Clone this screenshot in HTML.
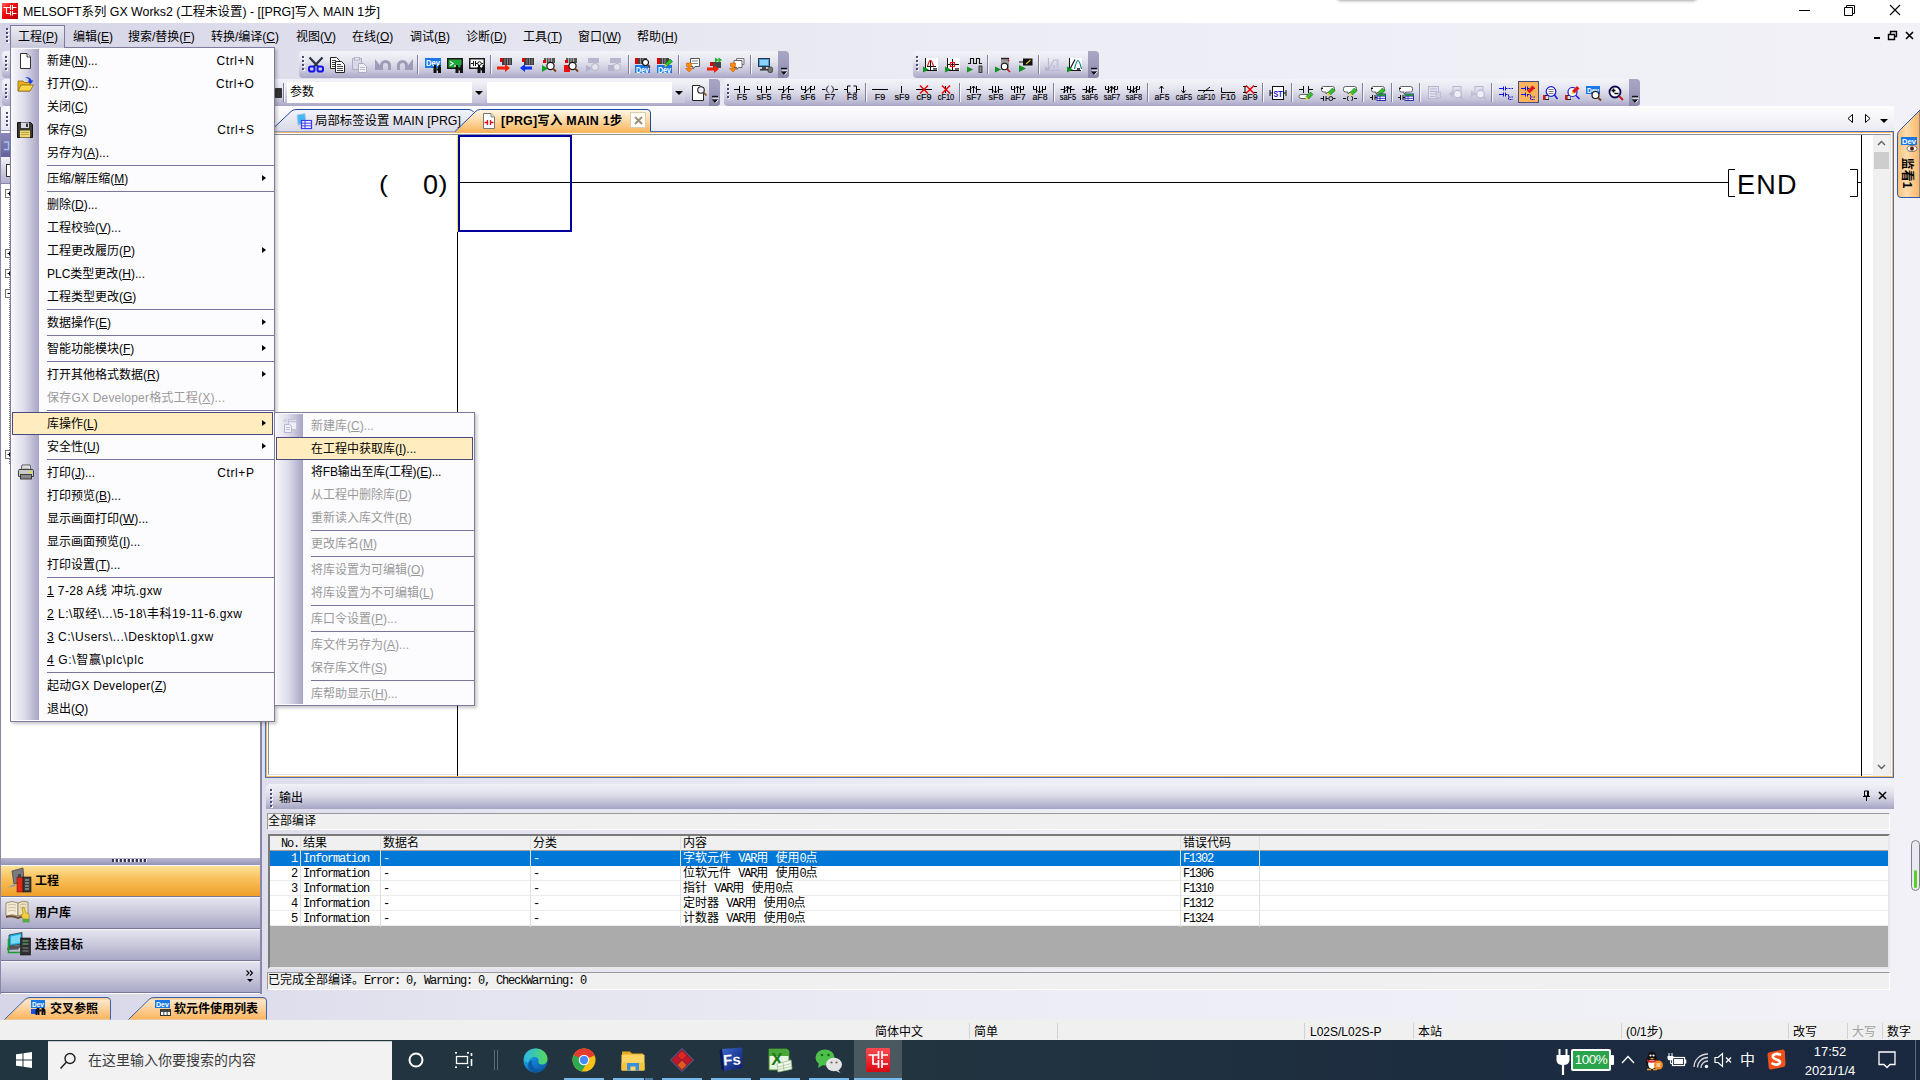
<!DOCTYPE html>
<html lang="zh-CN">
<head>
<meta charset="utf-8">
<title>MELSOFT系列 GX Works2</title>
<style>
*{box-sizing:border-box;margin:0;padding:0}
html,body{width:1920px;height:1080px;overflow:hidden}
body{position:relative;background:linear-gradient(to right,#d6d6e8 0,#e4e4f0 25%,#ededf5 55%,#f1f1f7 100%);font-family:"Liberation Sans","Noto Sans CJK SC",sans-serif;font-size:12px;color:#000;line-height:1}
.abs{position:absolute}
u{text-decoration:underline;text-underline-offset:1px}
svg{display:block;overflow:visible}
/* title */
#title{left:0;top:0;width:1920px;height:23px;background:#fff}
#title .txt{left:23px;top:6px;font-size:12.4px;white-space:nowrap}
/* menubar / docks */
#dock{left:0;top:23px;width:1920px;height:84px;background:linear-gradient(to right,#d4d4e6 0,#e4e4f0 25%,#ededf5 55%,#f1f1f7 100%)}
.mi{top:31px;white-space:nowrap;font-size:12px}
/* toolbars */
.tb{border-radius:4px 3px 3px 4px;background:linear-gradient(to bottom,#f3f3f9 0,#e6e6f0 35%,#c6c5db 75%,#a9a7c6 100%);height:27px}
.tb .cap{position:absolute;right:0;top:0;width:11px;height:27px;border-radius:0 4px 4px 0;background:linear-gradient(to bottom,#a9a7c4 0,#9d9bbb 50%,#8886a8 100%)}
.grip{position:absolute;left:3px;top:5px;width:2px;height:14px;background:repeating-linear-gradient(to bottom,#4a4878 0,#4a4878 2px,transparent 2px,transparent 4px);filter:drop-shadow(1px 1px 0 #fff)}
.sep{position:absolute;top:4px;width:2px;height:19px;border-left:1px solid #7f7da0;border-right:1px solid #f6f6fb}
/* tab strip */
#tabrow{left:262px;top:106px;width:1632px;height:25px;background:linear-gradient(to bottom,#fdfdfe 0,#f5f5f9 50%,#e9e9f1 100%)}
/* editor */
#edwrap{left:265px;top:131px;width:1629px;height:647px;background:#fff;border:1px solid #4a6fb5}
#edin{position:absolute;left:0;top:0;right:0;bottom:0;border:1px solid #f5b864}
#edin2{position:absolute;left:1px;top:1px;right:1px;bottom:1px;border:1px solid #8e8e98;border-right-color:#e4e4e4;border-bottom-color:#e4e4e4}
.lad{font-family:"Liberation Sans",sans-serif;font-size:27px;white-space:nowrap}
/* left panel */
#left{left:0;top:107px;width:262px;height:887px;background:#fff;border-left:1px solid #8a88aa;border-right:2px solid #8a88aa}
.nav{position:absolute;left:0;width:259px;height:32px;border-top:1px solid #f6f6fb;border-bottom:1px solid #77759a;background:linear-gradient(to bottom,#e4e4ef 0,#cfcee0 40%,#a9a7c6 100%);font-weight:bold;font-size:12px}
.nav span{position:absolute;left:34px;top:9px}
.nav.on{background:linear-gradient(to bottom,#fbe29a 0,#f9c25e 40%,#ef9f28 100%)}
/* output */
#outhead{left:266px;top:784px;width:1628px;height:25px;border-radius:4px 4px 0 0;background:linear-gradient(to bottom,#f0f0f7 0,#e0e0ec 40%,#c0bfd6 75%,#a5a3c3 100%)}
.sunk{background:#f0f0f0;border:1px solid;border-color:#9a9a9a #fff #fff #9a9a9a}
.ss{font-family:"Liberation Mono","Noto Sans CJK SC",monospace;font-size:12px;white-space:nowrap;line-height:15px}
.ss i{font-style:normal;letter-spacing:-1.2px}
#otab{left:268px;top:834px;width:1622px;height:135px;background:#ababab;border:2px solid;border-color:#7a7a7a #e8e8e8 #e8e8e8 #7a7a7a}
#otab .hd{position:absolute;left:0;top:0;width:1618px;height:15px;background:#f0f0f0;border-bottom:1px solid #a0a0a0}
#otab .r{position:absolute;left:0;width:1618px;height:15px;background:#fff;border-bottom:1px solid #ececec}
#otab .r.sel{background:#0078d7;color:#fff;border-bottom-color:#0078d7}
#otab .c{position:absolute;top:1px;height:15px}
#otab .v{position:absolute;top:0;width:1px;height:91px;background:#e0e0e0}
/* bottom tabs */
.btab{position:absolute;top:997px;height:23px}
.btab span{position:absolute;top:6px;font-weight:bold;font-size:12px;white-space:nowrap}
/* status bar */
#status{left:0;top:1020px;width:1920px;height:20px;background:#f0f0f0}
#status div{position:absolute;top:6px;font-size:12px;white-space:nowrap}
#status b{position:absolute;top:3px;width:1px;height:16px;background:#d2d2d2}
/* taskbar */
#task{left:0;top:1040px;width:1920px;height:40px;background:linear-gradient(to right,#20353f 0,#22343f 45%,#1e2e40 70%,#1a2840 100%)}
#task .ul{position:absolute;top:38px;height:2px;background:#76b9ed}
/* document tabs */
.dtab{position:absolute;top:109px;height:23px}
.dtab span{position:absolute;top:6px;font-size:12.4px;white-space:nowrap}
/* popup menus */
.menu{position:absolute;background:#fcfbfe;border:1px solid #7d7b9e;box-shadow:2px 2px 3px rgba(0,0,0,.22)}
.menu .gut{position:absolute;left:1px;top:1px;bottom:1px;width:27px;background:linear-gradient(to right,#f6f6fb 0,#dddcea 45%,#a7a5c5 100%)}
.menu .it{position:absolute;left:0;height:23px;font-size:12px;white-space:nowrap}
.menu .it span{position:absolute;top:6px}
.menu .it .k{left:auto;right:18.500px;letter-spacing:.6px}
.menu .it .ar{position:absolute;right:7px;top:8px;width:0;height:0;border-left:4px solid #000;border-top:3.500px solid transparent;border-bottom:3.500px solid transparent}
.menu .hr{position:absolute;height:1px;background:#77759b}
.menu .hot{position:absolute;border:1px solid #4b4980;background:#ffedc0}
.menu .dis{color:#9a9a9a}
</style>
</head>
<body>
<!-- title bar -->
<div id="title" class="abs">
 <svg class="abs" style="left:2px;top:3px" width="16" height="16" viewBox="0 0 16 16">
  <defs><linearGradient id="gxr" x1="0" y1="0" x2="1" y2="1"><stop offset="0" stop-color="#ff5a5a"/><stop offset=".4" stop-color="#f01010"/><stop offset="1" stop-color="#b80008"/></linearGradient></defs>
  <rect width="16" height="16" fill="url(#gxr)"/>
  <path d="M1.500 4.500H8.500M8.500 2V7M10.500 2V7M10.500 4.500H14.500M4.500 4.500V10.500H8.500M8.500 8V12.500M10.500 8V12.500M10.500 10.500H14.500" stroke="#fff" stroke-width="1.100" fill="none"/>
 </svg>
 <div class="abs txt">MELSOFT系列 GX Works2 (工程未设置) - [[PRG]写入 MAIN 1步]</div>
 <div class="abs" style="left:1338px;top:-5px;width:358px;height:5px;background:#b4b4b4;border-radius:0 0 3px 3px;box-shadow:0 0 3px 1px rgba(0,0,0,.35)"></div>
 <svg class="abs" style="left:1780px;top:0" width="140" height="23" viewBox="0 0 140 23">
  <path d="M19 10.5H30" stroke="#000" stroke-width="1" fill="none"/>
  <path d="M64.5 7.5H72.5V15.5H64.5ZM66.5 7.5V5.5H74.5V13.5H72.5" stroke="#000" stroke-width="1" fill="none"/>
  <path d="M110 5L120 15M120 5L110 15" stroke="#000" stroke-width="1.1" fill="none"/>
 </svg>
</div>
<!-- menubar + toolbar dock -->
<div id="dock" class="abs"></div>
<div class="grip" style="left:6px;top:28px;height:14px"></div>
<div class="abs" id="mopen" style="left:10px;top:25px;width:55px;height:23px;border:1px solid #7d7b9e;border-bottom:none;background:linear-gradient(to bottom,#ececf4,#c9c8dc)"></div>
<div class="abs mi" style="left:18px">工程(<u>P</u>)</div>
<div class="abs mi" style="left:73px">编辑(<u>E</u>)</div>
<div class="abs mi" style="left:128px">搜索/替换(<u>F</u>)</div>
<div class="abs mi" style="left:211px">转换/编译(<u>C</u>)</div>
<div class="abs mi" style="left:296px">视图(<u>V</u>)</div>
<div class="abs mi" style="left:352px">在线(<u>O</u>)</div>
<div class="abs mi" style="left:410px">调试(<u>B</u>)</div>
<div class="abs mi" style="left:466px">诊断(<u>D</u>)</div>
<div class="abs mi" style="left:523px">工具(<u>T</u>)</div>
<div class="abs mi" style="left:578px">窗口(<u>W</u>)</div>
<div class="abs mi" style="left:637px">帮助(<u>H</u>)</div>
<svg class="abs" style="left:1868px;top:28px" width="48" height="16" viewBox="0 0 48 16">
 <rect x="6" y="9" width="6" height="2" fill="#000"/>
 <path d="M20.5 6.5H26.5V11.5H20.5ZM22.5 6V3.5H28.5V8.5H27" stroke="#000" stroke-width="1.4" fill="none"/>
 <path d="M38 4L45 11M45 4L38 11" stroke="#000" stroke-width="1.6" fill="none"/>
</svg>
<!-- tab strip row -->
<div id="tabrow" class="abs"></div>
<!-- left navigation panel -->
<div id="left" class="abs">
 <div class="abs" style="left:0;top:-1px;width:259px;height:25px;background:linear-gradient(to bottom,#fafafd,#e4e4ef);border-radius:4px 0 0 0;border-bottom:1px solid #9a98b8"></div>
 <div class="grip" style="left:5px;top:5px;height:14px"></div>
 <div class="abs" style="left:0;top:26px;width:259px;height:24px;background:linear-gradient(to bottom,#8a88b8,#64629a)"></div>
 <svg class="abs" style="left:1px;top:34px" width="8" height="10" viewBox="0 0 8 10"><path d="M2 1H6.500V8.500H2" fill="none" stroke="#9ec4f4" stroke-width="1.400"/></svg>
 <div class="abs" style="left:0;top:50px;width:259px;height:27px;background:linear-gradient(to bottom,#f2f2f8,#b0aecc);border-bottom:1px solid #8a88aa"></div>
 <div class="abs" style="left:5px;top:57px;width:8px;height:13px;background:#fff;border:1px solid #333"></div>
 <div class="abs" style="left:8px;top:88px;width:1px;height:270px;background:repeating-linear-gradient(to bottom,#888 0,#888 1px,transparent 1px,transparent 2px)"></div>
 <svg class="abs" style="left:4px;top:82px" width="9" height="280" viewBox="0 0 9 280"><g fill="#fff" stroke="#777" stroke-width="1"><rect x="0.500" y="0.500" width="8" height="8"/><rect x="0.500" y="60.500" width="8" height="8"/><rect x="0.500" y="80.500" width="8" height="8"/><rect x="0.500" y="100.500" width="8" height="8"/><rect x="0.500" y="261.500" width="8" height="8"/></g><path d="M2.500 4.500H6.500M4.500 2.500V6.500M2.500 64.500H6.500M4.500 62.500V66.500M2.500 84.500H6.500M4.500 82.500V86.500M2.500 104.500H6.500M2.500 265.500H6.500M4.500 263.500V267.500" stroke="#000" stroke-width="1"/></svg>
 <div class="abs" style="left:0;top:751px;width:259px;height:7px;background:linear-gradient(to bottom,#b9b8d0,#9593b6)"></div>
 <div class="abs" style="left:111px;top:752px;width:36px;height:3px;background:repeating-linear-gradient(to right,#33315a 0,#33315a 2px,#fff 2px,#fff 3px,transparent 3px,transparent 4px)"></div>
 <div class="nav on" style="top:758px"><span>工程</span></div>
 <div class="nav" style="top:790px"><span>用户库</span></div>
 <div class="nav" style="top:822px"><span>连接目标</span></div>
 <div class="nav" style="top:854px;height:32px"></div>
 <svg class="abs" style="left:5px;top:760px" width="26" height="28" viewBox="0 0 26 28"><path d="M6 4L17 1L18 15L8 17Z" fill="#7a7a82" stroke="#444" stroke-width=".8"/><path d="M8 17L1 21L10 19Z" fill="#9a9aa4"/><rect x="11" y="10" width="6" height="15" fill="#e02818" stroke="#7a1008" stroke-width=".6"/><rect x="12" y="7" width="3" height="4" fill="#444"/><rect x="17" y="10" width="8" height="15" fill="#3a3a3e" stroke="#111" stroke-width=".6"/><path d="M19 13H23M19 16H23M19 19H23M19 22H23" stroke="#b8c8b8" stroke-width="1.200"/></svg>
 <svg class="abs" style="left:4px;top:792px" width="27" height="26" viewBox="0 0 27 26"><path d="M1 4Q7 1 13 4V17Q7 14.500 1 17Z" fill="#f4ecd8" stroke="#8a7a5a" stroke-width=".8"/><path d="M13 4Q18 1 23 3V16Q18 14.500 13 17Z" fill="#ece0c4" stroke="#8a7a5a" stroke-width=".8"/><path d="M1 17Q7 15 13 18Q18 15.500 23 16.500V18.500Q18 17.500 13 20Q7 17 1 19Z" fill="#6a4a2a"/><path d="M3 6Q7 4.500 11 6M3 9Q7 7.500 11 9M3 12Q7 10.500 11 12M15 6Q18 4.500 21 5.500M15 9Q18 7.500 21 8.500" stroke="#b0a080" stroke-width=".6" fill="none"/><path d="M17 9L19 8.500L21 14L24 15V20H18L16 16L18 15Z" fill="#f0d040" stroke="#a08010" stroke-width=".6"/><rect x="17.500" y="20" width="7" height="3.500" fill="#5aa84a"/></svg>
 <svg class="abs" style="left:5px;top:824px" width="26" height="26" viewBox="0 0 26 26"><path d="M3 4L16 1.500V13L3 15Z" fill="#18b0e8" stroke="#333" stroke-width=".8"/><path d="M5 5.500L14.500 3.500V11.500L5 13Z" fill="#7ad8f8"/><path d="M2 15L1 19L12 18.500L16 14Z" fill="#555"/><path d="M2.500 8V21.500H14" stroke="#18a028" stroke-width="1.600" fill="none"/><rect x="14.500" y="7" width="10" height="17" fill="#2e2e32" stroke="#111" stroke-width=".6"/><path d="M16.500 10H22.500M16.500 13H22.500" stroke="#6ac87a" stroke-width="1.200"/><path d="M16.500 17H22.500M16.500 20H22.500" stroke="#888" stroke-width="1.200"/></svg>

 <svg class="abs" style="left:244px;top:862px" width="10" height="16" viewBox="0 0 10 16"><path d="M1.5 1.5L4 4L1.5 6.5M5 1.5L7.5 4L5 6.5" stroke="#000" stroke-width="1.1" fill="none"/><path d="M2 10H8L5 13Z" fill="#000"/></svg>
</div>
<!-- editor -->
<div id="edwrap" class="abs"><div id="edin"><div id="edin2"></div></div>
 <!-- scrollbar -->
 <div class="abs" style="left:1607px;top:3px;width:17px;height:641px;background:#f0f0f0"></div>
 <div class="abs" style="left:1608px;top:20px;width:15px;height:17px;background:#cdcdcd"></div>
 <svg class="abs" style="left:1611px;top:8px" width="9" height="6" viewBox="0 0 9 6"><path d="M1 5L4.5 1.5L8 5" stroke="#606060" stroke-width="1.4" fill="none"/></svg>
 <svg class="abs" style="left:1611px;top:632px" width="9" height="6" viewBox="0 0 9 6"><path d="M1 1L4.5 4.5L8 1" stroke="#606060" stroke-width="1.4" fill="none"/></svg>
 <!-- ladder -->
 <div class="abs" style="left:191px;top:100px;width:1px;height:544px;background:#000"></div>
 <div class="abs" style="left:1595px;top:3px;width:1px;height:641px;background:#000"></div>
 <div class="abs" style="left:192px;top:50px;width:1270px;height:1px;background:#000"></div>
 <div class="abs" style="left:192px;top:3px;width:114px;height:97px;border:2px solid #0000a0"></div><div class="abs" style="left:191px;top:3px;width:1px;height:97px;background:#f0f040"></div>
 <div class="abs lad" style="left:113px;top:40px;transform:translateY(1px) scaleY(.87);transform-origin:50% 0">(</div>
 <div class="abs lad" style="left:157px;top:40px">0</div><div class="abs lad" style="left:172.500px;top:40px;transform:translateY(1px) scaleY(.87);transform-origin:50% 0">)</div>
 <div class="abs lad" style="left:1471px;top:40px;letter-spacing:1.2px">END</div>
 <svg class="abs" style="left:1461px;top:36px" width="140" height="30" viewBox="0 0 140 30"><path d="M8 1.5H1.5V28.5H8M123 1.5H130.500V28.5H123M131 14.500H135" stroke="#000" stroke-width="1" fill="none"/></svg>
</div>
<!-- output header -->
<div id="outhead" class="abs">
 <div class="grip" style="left:4px;top:5px;height:18px"></div>
 <div class="abs" style="left:13px;top:8px;font-size:12px">输出</div>
 <svg class="abs" style="left:1594px;top:6px" width="30" height="12" viewBox="0 0 30 12"><path d="M4.500 1H8.500V6H4.500ZM7.500 1V6M3 6.500H10M6.500 7V11" stroke="#000" stroke-width="1" fill="none"/><path d="M19 2L26 9M26 2L19 9" stroke="#000" stroke-width="1.5" fill="none"/></svg>
</div>
<div class="abs sunk ss" style="left:267px;top:813px;width:1623px;height:17px;padding-left:0"><span style="position:relative;top:1px">全部编译</span></div>
<div id="otab" class="abs ss">
 <div class="hd"><div class="c" style="left:11px"><i>No.</i></div><div class="c" style="left:33px">结果</div><div class="c" style="left:113px">数据名</div><div class="c" style="left:263px">分类</div><div class="c" style="left:413px">内容</div><div class="c" style="left:913px">错误代码</div></div>
 <div class="r sel" style="top:15px"><div class="c" style="left:21px"><i>1</i></div><div class="c" style="left:33px"><i>Information</i></div><div class="c" style="left:113px"><i>-</i></div><div class="c" style="left:263px"><i>-</i></div><div class="c" style="left:413px">字软元件 <i>VAR</i>用 使用<i>0</i>点</div><div class="c" style="left:913px"><i>F1302</i></div></div>
 <div class="r" style="top:30px"><div class="c" style="left:21px"><i>2</i></div><div class="c" style="left:33px"><i>Information</i></div><div class="c" style="left:113px"><i>-</i></div><div class="c" style="left:263px"><i>-</i></div><div class="c" style="left:413px">位软元件 <i>VAR</i>用 使用<i>0</i>点</div><div class="c" style="left:913px"><i>F1306</i></div></div>
 <div class="r" style="top:45px"><div class="c" style="left:21px"><i>3</i></div><div class="c" style="left:33px"><i>Information</i></div><div class="c" style="left:113px"><i>-</i></div><div class="c" style="left:263px"><i>-</i></div><div class="c" style="left:413px">指针 <i>VAR</i>用 使用<i>0</i>点</div><div class="c" style="left:913px"><i>F1310</i></div></div>
 <div class="r" style="top:60px"><div class="c" style="left:21px"><i>4</i></div><div class="c" style="left:33px"><i>Information</i></div><div class="c" style="left:113px"><i>-</i></div><div class="c" style="left:263px"><i>-</i></div><div class="c" style="left:413px">定时器 <i>VAR</i>用 使用<i>0</i>点</div><div class="c" style="left:913px"><i>F1312</i></div></div>
 <div class="r" style="top:75px"><div class="c" style="left:21px"><i>5</i></div><div class="c" style="left:33px"><i>Information</i></div><div class="c" style="left:113px"><i>-</i></div><div class="c" style="left:263px"><i>-</i></div><div class="c" style="left:413px">计数器 <i>VAR</i>用 使用<i>0</i>点</div><div class="c" style="left:913px"><i>F1324</i></div></div>
 <div class="v" style="left:30px"></div><div class="v" style="left:110px"></div><div class="v" style="left:260px"></div><div class="v" style="left:410px"></div><div class="v" style="left:910px"></div><div class="v" style="left:989px"></div>
</div>
<div class="abs sunk ss" style="left:267px;top:972px;width:1623px;height:18px"><span style="position:relative;top:1px">已完成全部编译。<i>Error: 0, Warning: 0, CheckWarning: 0</i></span></div>
<!-- scroll pill at far right -->
<div class="abs" style="left:1911px;top:840px;width:9px;height:51px;border:1.500px solid #7e7e86;border-radius:5px;background:#e9e9f1"><div class="abs" style="left:1.500px;top:29px;width:3px;height:18px;background:#58d020;border-radius:1.500px"></div></div>
<!-- bottom tabs -->
<div class="btab" style="left:4px;width:107px">
 <svg class="abs" style="left:0;top:0" width="107" height="23" viewBox="0 0 107 23"><defs><linearGradient id="og" x1="0" y1="0" x2="0" y2="1"><stop offset="0" stop-color="#fbc27a"/><stop offset=".14" stop-color="#fde6c8"/><stop offset="1" stop-color="#fbb45c"/></linearGradient></defs><path d="M0.500 22.500L21 2.500Q23 0.500 26 0.500H103Q106.500 0.500 106.500 4V22.500" fill="url(#og)" stroke="#3a62b0" stroke-width="1"/></svg>
 <svg class="abs" style="left:27px;top:3px" width="16" height="16" viewBox="0 0 16 16"><rect x="0" y="0" width="14" height="8" fill="#1a78e6"/><text x="7" y="7" font-family="Liberation Sans,sans-serif" font-size="8" font-weight="bold" fill="#fff" text-anchor="middle" textLength="12" lengthAdjust="spacingAndGlyphs">Dev</text><rect x="0" y="9" width="7" height="5" fill="#1a50e0"/><path d="M6 8H8.500V15H6.800V12H6.300V15H4.500V10ZM10.500 8H13L14.500 10V15H12.700V12H12.300V15H10.500Z" fill="#111"/><rect x="8.300" y="9.500" width="2.400" height="2" fill="#111"/></svg>
 <span style="left:46px">交叉参照</span>
</div>
<div class="btab" style="left:128px;width:139px">
 <svg class="abs" style="left:0;top:0" width="139" height="23" viewBox="0 0 139 23"><path d="M0.500 22.500L21 2.500Q23 0.500 26 0.500H135Q138.500 0.500 138.500 4V22.500" fill="url(#og)" stroke="#3a62b0" stroke-width="1"/></svg>
 <svg class="abs" style="left:27px;top:3px" width="16" height="16" viewBox="0 0 16 16"><rect x="0" y="0" width="15" height="8" fill="#1a78e6"/><text x="7.500" y="7" font-family="Liberation Sans,sans-serif" font-size="8" font-weight="bold" fill="#fff" text-anchor="middle" textLength="13" lengthAdjust="spacingAndGlyphs">Dev</text><rect x="5.500" y="9.500" width="10" height="6" fill="#fff" stroke="#333" stroke-width="1"/><path d="M5.500 11.500H15.500M8.800 9.500V15.500M12.200 9.500V15.500" stroke="#333" stroke-width=".9"/><rect x="5.500" y="9.500" width="10" height="2" fill="#444"/></svg>
 <span style="left:46px">软元件使用列表</span>
</div>
<!-- status bar -->
<div id="status" class="abs">
 <div style="left:875px">简体中文</div><b style="left:969px"></b>
 <div style="left:974px">简单</div><b style="left:1057px"></b>
 <b style="left:1304px"></b><div style="left:1310px">L02S/L02S-P</div>
 <b style="left:1413px"></b><div style="left:1418px">本站</div>
 <b style="left:1621px"></b><div style="left:1626px">(0/1步)</div>
 <b style="left:1788px"></b><div style="left:1793px">改写</div>
 <b style="left:1847px"></b><div style="left:1852px;color:#a0a0a0">大写</div>
 <b style="left:1882px"></b><div style="left:1887px">数字</div>
</div>
<!-- windows taskbar -->
<div id="task" class="abs">
 <svg class="abs" style="left:16px;top:12px" width="16" height="16" viewBox="0 0 16 16"><path d="M0 2.300L6.500 1.400V7.500H0ZM7.500 1.250L16 0V7.500H7.500ZM0 8.500H6.500V14.600L0 13.700ZM7.500 8.500H16V16L7.500 14.750Z" fill="#fff"/></svg>
 <div class="abs" style="left:48px;top:1px;width:344px;height:39px;background:#f2f2f2;border-top:1px solid #c8c8c8"></div>
 <svg class="abs" style="left:59px;top:12px" width="18" height="18" viewBox="0 0 18 18"><circle cx="11" cy="6.500" r="5" fill="none" stroke="#222" stroke-width="1.400"/><path d="M7.500 10L1.500 16.500" stroke="#222" stroke-width="1.500"/></svg>
 <div class="abs" style="left:88px;top:13px;font-size:14px;color:#3a3a3a;white-space:nowrap">在这里输入你要搜索的内容</div>
 <svg class="abs" style="left:407px;top:11px" width="18" height="18" viewBox="0 0 18 18"><circle cx="9" cy="9" r="6.500" fill="none" stroke="#fff" stroke-width="2"/></svg>
 <svg class="abs" style="left:454px;top:11px" width="20" height="18" viewBox="0 0 20 18"><path d="M1 1.500H3M1 16.500H3M13 1.500H15M13 16.500H15M2 1.500V3M14 1.500V3M2 16.500V15M14 16.500V15" stroke="#fff" stroke-width="1.200" fill="none"/><rect x="2.500" y="5.500" width="11" height="7" fill="none" stroke="#fff" stroke-width="1.300"/><path d="M17.500 2V5M17.500 8V15" stroke="#fff" stroke-width="1.600"/></svg>
 <div class="abs" style="left:494px;top:10px;width:1px;height:20px;background:#5a6870"></div><div class="abs" style="left:497px;top:10px;width:1px;height:20px;background:#5a6870"></div>
 <!-- edge -->
 <svg class="abs" style="left:523px;top:8px" width="25" height="25" viewBox="0 0 25 25"><defs><linearGradient id="eg" x1="0" y1="0" x2="1" y2="1"><stop offset="0" stop-color="#35c1f1"/><stop offset=".5" stop-color="#0f7fd0"/><stop offset="1" stop-color="#0b4f9c"/></linearGradient><linearGradient id="eg2" x1="0" y1="0" x2="1" y2="0"><stop offset="0" stop-color="#2ab8e8"/><stop offset="1" stop-color="#57d85a"/></linearGradient></defs><circle cx="12.500" cy="12.500" r="12" fill="url(#eg)"/><path d="M1 10C2 3.500 8 0.500 13 0.500C19 0.500 24.500 5 24.500 11C24.500 14.500 22 16.500 19 16.500C16 16.500 15 15 15.500 13.500C16 12 15 9 11.500 9C8 9 5.500 11.500 5.500 15C3 14 0.800 13 1 10Z" fill="url(#eg2)"/><path d="M9 13C8 17 11 21.500 16.500 21.500C19 21.500 21 20.500 22 19.500C20 23 16 24.800 12 24.500C7 24 4.500 20 5.500 15.500C6 13.500 7.500 12.500 9 13Z" fill="#0c59a4"/></svg>
 <!-- chrome -->
 <svg class="abs" style="left:572px;top:8px" width="24" height="24" viewBox="0 0 24 24"><circle cx="12" cy="12" r="11.500" fill="#fbc116"/><path d="M12 12L1.500 7.500A11.500 11.500 0 0 1 22.500 7.500Z" fill="#e33b2e"/><path d="M12 12L1.700 7A11.500 11.500 0 0 0 10 23.300L14 16Z" fill="#2da94f"/><path d="M1.700 7A11.500 11.500 0 0 1 22.300 7H12Z" fill="#e33b2e"/><circle cx="12" cy="12" r="5.300" fill="#fff"/><circle cx="12" cy="12" r="4.200" fill="#4a8af4"/></svg>
 <!-- explorer -->
 <svg class="abs" style="left:621px;top:10px" width="24" height="22" viewBox="0 0 24 22"><path d="M1 1.500H9L11 3.500H22V8H1Z" fill="#e8a81c"/><rect x="0.500" y="4.500" width="23" height="16" rx="1" fill="#fcd462"/><path d="M0.500 13H23.500V20.500H0.500Z" fill="#f8c43c"/><rect x="6" y="13" width="12" height="7.500" fill="#3a8ee0"/><rect x="9.500" y="16.500" width="5" height="4" fill="#fcd462"/></svg>
 <!-- diamond app -->
 <svg class="abs" style="left:670px;top:8px" width="24" height="24" viewBox="0 0 24 24"><path d="M12 0.500L23.500 12L12 23.500L0.500 12Z" fill="#8a1a3a" stroke="#5a6a9a" stroke-width="1"/><path d="M12 3L16.500 7.500L12 12L7.500 7.500Z" fill="#e0281c"/><path d="M6.500 8.500L11 13L6.500 17.500L2.500 13Z" fill="#c01828" transform="translate(0 -1)"/><path d="M17.500 8.500L21.500 13L17.500 17.500L13 13Z" fill="#c01828" transform="translate(0 -1)"/><path d="M12 12.500L16.500 17L12 21.500L7.500 17Z" fill="#e05a1c"/></svg>
 <!-- Fs -->
 <svg class="abs" style="left:719px;top:7px" width="24" height="27" viewBox="0 0 24 27"><defs><linearGradient id="fg" x1="0" y1="0" x2="1" y2="1"><stop offset="0" stop-color="#3a6ad0"/><stop offset="1" stop-color="#0a1a6a"/></linearGradient></defs><path d="M3 2L22 0.500Q23.500 0.500 23.500 2V21L5 24Z" fill="url(#fg)"/><path d="M0.500 3.500L3 2L5 24L2.500 22Z" fill="#0a1450"/><text x="13" y="18" font-family="Liberation Sans,sans-serif" font-weight="bold" font-size="15" fill="#fff" text-anchor="middle" transform="rotate(-4 13 14)">Fs</text></svg>
 <!-- excel -->
 <svg class="abs" style="left:767px;top:7px" width="26" height="26" viewBox="0 0 26 26"><path d="M2 2H20L22 4V23H2Z" fill="#e8f4e0" stroke="#3a8a2a" stroke-width="1"/><path d="M2 2H20L22 4V9H2Z" fill="#4aa83a"/><text x="10" y="18" font-family="Liberation Sans,sans-serif" font-weight="bold" font-size="17" fill="#1a7a1a" text-anchor="middle">X</text><path d="M10 17L24 13L25 22L11 25Z" fill="#f4f8f0" stroke="#9ac08a" stroke-width=".8"/><path d="M11 20L24.500 16.500M11 22.500L24.500 19.500M16 15.500L17 24" stroke="#9ac08a" stroke-width=".7"/></svg>
 <!-- wechat -->
 <svg class="abs" style="left:815px;top:9px" width="28" height="24" viewBox="0 0 28 24"><ellipse cx="10" cy="8.500" rx="9.500" ry="8" fill="#4cc04a"/><path d="M4 14L3 19L8 16Z" fill="#4cc04a"/><circle cx="7" cy="6" r="1.300" fill="#1a6a1a"/><circle cx="13.500" cy="6" r="1.300" fill="#1a6a1a"/><ellipse cx="19" cy="15.500" rx="8" ry="6.800" fill="#e4e4e4"/><path d="M23 21L25.500 24L21 22Z" fill="#e4e4e4"/><circle cx="16.500" cy="13.500" r="1.100" fill="#666"/><circle cx="21.500" cy="13.500" r="1.100" fill="#666"/></svg>
 <!-- gx works (active) -->
 <div class="abs" style="left:854px;top:0;width:48px;height:40px;background:#4a5860"></div>
 <svg class="abs" style="left:866px;top:8px" width="24" height="24" viewBox="0 0 24 24"><defs><linearGradient id="gxr2" x1="0" y1="0" x2="0" y2="1"><stop offset="0" stop-color="#ff4a50"/><stop offset="1" stop-color="#d80a14"/></linearGradient></defs><rect width="24" height="24" rx="1.500" fill="url(#gxr2)"/><path d="M2.500 7H12.500M12.500 3V11M16 3V11M16 7H22M7 7V16H12.500M12.500 12V20M16 12V20M16 16H22" stroke="#fff" stroke-width="1.700" fill="none"/></svg>
 <div class="ul" style="left:564px;width:40px"></div>
 <div class="ul" style="left:613px;width:31px"></div><div class="ul" style="left:645px;width:8px;background:#4d7ea3"></div>
 <div class="ul" style="left:662px;width:40px"></div>
 <div class="ul" style="left:711px;width:40px"></div>
 <div class="ul" style="left:760px;width:40px"></div>
 <div class="ul" style="left:809px;width:40px"></div>
 <div class="ul" style="left:854px;width:48px"></div>
 <!-- tray -->
 <svg class="abs" style="left:1556px;top:9px" width="14" height="26" viewBox="0 0 14 26"><path d="M3.500 0V6M10.500 0V6" stroke="#fff" stroke-width="2"/><path d="M0.500 6H13.500V11Q13.500 16 7 16Q0.500 16 0.500 11Z" fill="#fff"/><path d="M7 16V26" stroke="#fff" stroke-width="2.200"/></svg>
 <div class="abs" style="left:1571px;top:9px;width:40px;height:22px;border:2px solid #fff;border-radius:2px;background:#2aa44a"></div>
 <div class="abs" style="left:1611px;top:15px;width:3px;height:10px;background:#fff;border-radius:0 1px 1px 0"></div>
 <div class="abs" style="left:1573px;top:13px;width:36px;text-align:center;color:#fff;font-size:13.500px;letter-spacing:-.5px">100%</div>
 <svg class="abs" style="left:1621px;top:15px" width="14" height="9" viewBox="0 0 14 9"><path d="M1 8L7 1.500L13 8" stroke="#fff" stroke-width="1.300" fill="none"/></svg>
 <svg class="abs" style="left:1644px;top:11px" width="20" height="20" viewBox="0 0 20 20"><ellipse cx="8" cy="11" rx="6" ry="7.500" fill="#111"/><ellipse cx="8" cy="13" rx="3.800" ry="5" fill="#fff"/><circle cx="8" cy="5" r="4.200" fill="#111"/><circle cx="6.500" cy="4.500" r="1.100" fill="#fff"/><circle cx="9.500" cy="4.500" r="1.100" fill="#fff"/><path d="M5.500 7H10.500L8 8.500Z" fill="#f0a020"/><path d="M3 8.500Q8 11 13 8.500V10.500Q8 13 3 10.500Z" fill="#e02020"/><path d="M3 18.500H7M9 18.500H13" stroke="#f0a020" stroke-width="1.600"/><circle cx="14.500" cy="14" r="4.500" fill="#f08a20"/><path d="M12.500 13H16.500M12.500 15H16.500" stroke="#fff" stroke-width="1"/></svg>
 <svg class="abs" style="left:1667px;top:13px" width="20" height="14" viewBox="0 0 20 14"><rect x="5.500" y="4.500" width="12" height="8" fill="none" stroke="#fff" stroke-width="1.200"/><rect x="17.500" y="6.500" width="1.800" height="4" fill="#fff"/><rect x="7" y="6" width="9" height="5" fill="#fff"/><path d="M2 0V3M5 0V3" stroke="#fff" stroke-width="1"/><path d="M0.500 3H6.500V5Q6.500 7.500 3.500 7.500Q0.500 7.500 0.500 5Z" fill="#fff"/><path d="M3.500 7.500V10.500H5.500" stroke="#fff" stroke-width="1" fill="none"/></svg>
 <svg class="abs" style="left:1692px;top:12px" width="18" height="17" viewBox="0 0 18 17"><path d="M2 15C2 8 8 2 16 2M5.500 15.500C5.500 10 10 5.500 16 5.500M9 16C9 12 12 9 16 9" stroke="#d8d8d8" stroke-width="1.300" fill="none"/><circle cx="14.500" cy="14.500" r="1.700" fill="#fff"/></svg>
 <svg class="abs" style="left:1714px;top:12px" width="20" height="16" viewBox="0 0 20 16"><path d="M1 5.500H4L8.500 1.500V14.500L4 10.500H1Z" fill="none" stroke="#fff" stroke-width="1.200"/><path d="M12 5.500L17 10.500M17 5.500L12 10.500" stroke="#fff" stroke-width="1.200"/></svg>
 <div class="abs" style="left:1740px;top:12px;color:#fff;font-size:15px">中</div>
 <svg class="abs" style="left:1767px;top:9px" width="19" height="21" viewBox="0 0 19 21"><path d="M2 3.500L15.500 0.500Q17.500 0.300 17.800 2.300L18.500 15.500Q18.500 17.500 16.500 18L4 20.500Q2 20.800 1.700 18.800L0.500 5.500Q0.500 3.800 2 3.500Z" fill="#f0501a"/><path d="M14 6Q9 3.500 6 6.500Q5 9 9.500 10.500Q14.500 12 12.500 14.500Q9.500 17 4.500 14" stroke="#fff" stroke-width="2.600" fill="none"/></svg>
 <div class="abs" style="left:1800px;top:5px;width:60px;text-align:center;color:#fff;font-size:13px">17:52</div>
 <div class="abs" style="left:1796px;top:24px;width:68px;text-align:center;color:#fff;font-size:13px">2021/1/4</div>
 <svg class="abs" style="left:1878px;top:11px" width="18" height="19" viewBox="0 0 18 19"><path d="M1 1H17V13.500H12L9 16.500L6 13.500H1Z" fill="none" stroke="#fff" stroke-width="1.300"/></svg>
 <div class="abs" style="left:1915px;top:0;width:1px;height:40px;background:#5a6878"></div>
</div>
<!-- toolbars -->
<div class="abs tb" style="left:2px;top:51px;width:268px">
<div class="grip"></div>

</div>
<div class="abs tb" style="left:299px;top:51px;width:490px">
<div class="grip"></div>
<svg class="abs" style="left:9px;top:6px" width="16" height="16" viewBox="0 0 16 16"><path d="M1.500 0.500L10 9.500M14.500 0.500L6 9.500" stroke="#2a3444" stroke-width="2.200" fill="none"/><rect x="1" y="9.500" width="5.500" height="5" rx="1.800" fill="none" stroke="#1414f0" stroke-width="2"/><rect x="9.500" y="9.500" width="5.500" height="5" rx="1.800" fill="none" stroke="#1414f0" stroke-width="2"/></svg>
<svg class="abs" style="left:31px;top:6px" width="16" height="16" viewBox="0 0 16 16"><path d="M0.500 0.500H6.500L9.500 3.500V11.500H0.500Z" fill="#fff" stroke="#222"/><path d="M2 3.500H6M2 5.500H8M2 7.500H8M2 9.500H8" stroke="#444" stroke-width="1"/><path d="M5.500 4.500H11.500L14.500 7.500V15.500H5.500Z" fill="#fff" stroke="#222"/><path d="M7 7.500H11M7 9.500H13M7 11.500H13M7 13.500H13" stroke="#444" stroke-width="1"/></svg>
<svg class="abs" style="left:53px;top:6px" width="16" height="16" viewBox="0 0 16 16"><path d="M0.500 1.500H9.500V12.500H0.500Z" fill="#d9d8e6" stroke="#adabc4"/><rect x="2.500" y="0.500" width="5" height="2.500" fill="#e8e8f0" stroke="#adabc4" stroke-width=".8"/><path d="M6.500 6.500H11.500L14.500 9.500V15.500H6.500Z" fill="#f0f0f6" stroke="#adabc4"/><path d="M8 10.500H13M8 12.500H13" stroke="#bdbbd0" stroke-width="1"/></svg>
<svg class="abs" style="left:76px;top:6px" width="16" height="16" viewBox="0 0 16 16"><path d="M0 2V13H8.500Z" fill="#9d9bb6"/><path d="M5 13V8.500A5.500 5.500 0 0 1 16 8.500V13H13V8.500A2.500 2.500 0 0 0 8 8.500V13Z" fill="#9d9bb6"/></svg>
<svg class="abs" style="left:98px;top:6px" width="16" height="16" viewBox="0 0 16 16"><path d="M16 2V13H7.500Z" fill="#9d9bb6"/><path d="M11 13V8.500A5.500 5.500 0 0 0 0 8.500V13H3V8.500A2.500 2.500 0 0 1 8 8.500V13Z" fill="#9d9bb6"/></svg>
<svg class="abs" style="left:126px;top:6px" width="16" height="16" viewBox="0 0 16 16"><rect x="0" y="1" width="16" height="10" fill="#1a78e6"/><text x="8" y="9" font-family="Liberation Sans,sans-serif" font-size="9" font-weight="bold" fill="#fff" text-anchor="middle" textLength="14" lengthAdjust="spacingAndGlyphs">Dev</text><path d="M9 8H11V10H11.500V16H8.500V10H9ZM13.500 8H15.500V10H16V16H13V10H13.500Z" fill="#111"/><rect x="11.500" y="11.500" width="1.500" height="2" fill="#111"/></svg>
<svg class="abs" style="left:148px;top:6px" width="16" height="16" viewBox="0 0 16 16"><rect x="0.750" y="1.750" width="14.500" height="9.500" fill="#1fa83a" stroke="#1a1a1a" stroke-width="1.500"/><path d="M3 4.500L6 6.500L3 8.500M7 9H11" stroke="#fff" stroke-width="1.200" fill="none"/><path d="M9 8H11V10H11.500V16H8.500V10H9ZM13.500 8H15.500V10H16V16H13V10H13.500Z" fill="#111"/><rect x="11.500" y="11.500" width="1.500" height="2" fill="#111"/></svg>
<svg class="abs" style="left:170px;top:6px" width="16" height="16" viewBox="0 0 16 16"><rect x="0.750" y="1.750" width="14.500" height="9.500" fill="#fff" stroke="#1a1a1a" stroke-width="1.500"/><path d="M2 6.500H4.500M4.500 4V9M6.500 4V9M6.500 6.500H8.500M12.500 6.500H14" stroke="#111" stroke-width="1" fill="none"/><circle cx="10.500" cy="6.500" r="1.800" fill="none" stroke="#111"/><path d="M9 8H11V10H11.500V16H8.500V10H9ZM13.500 8H15.500V10H16V16H13V10H13.500Z" fill="#111"/><rect x="11.500" y="11.500" width="1.500" height="2" fill="#111"/></svg>
<svg class="abs" style="left:198px;top:6px" width="16" height="16" viewBox="0 0 16 16"><rect x="5" y="1" width="10" height="7" fill="#3a3a3a"/><path d="M8 1.500V7.500M10.500 1.500V7.500M13 1.500V7.500" stroke="#888" stroke-width="1"/><rect x="3" y="1" width="3" height="4" fill="#e00000"/><path d="M0 9.500H8V7L13 11L8 15V12.500H0Z" fill="#f02000"/></svg>
<svg class="abs" style="left:220px;top:6px" width="16" height="16" viewBox="0 0 16 16"><rect x="5" y="1" width="10" height="7" fill="#3a3a3a"/><path d="M8 1.500V7.500M10.500 1.500V7.500M13 1.500V7.500" stroke="#888" stroke-width="1"/><rect x="3" y="1" width="3" height="4" fill="#e00000"/><path d="M13 9.500H6V7L1 11L6 15V12.500H13Z" fill="#0a30f0"/></svg>
<svg class="abs" style="left:242px;top:6px" width="16" height="16" viewBox="0 0 16 16"><rect x="3" y="1" width="11" height="5" fill="#555"/><path d="M5.500 1V6M8 1V6M10.500 1V6" stroke="#bbb" stroke-width=".9"/><rect x="2" y="3" width="3" height="3" fill="#e00000"/><path d="M1 8L7 11.500L1 15Z" fill="#10a020"/><circle cx="9.500" cy="9" r="3.600" fill="#fff" stroke="#111" stroke-width="1.200"/><path d="M12 11.500L15 14.500" stroke="#7a3a10" stroke-width="1.800"/></svg>
<svg class="abs" style="left:264px;top:6px" width="16" height="16" viewBox="0 0 16 16"><rect x="3" y="1" width="11" height="5" fill="#555"/><path d="M5.500 1V6M8 1V6M10.500 1V6" stroke="#bbb" stroke-width=".9"/><rect x="2" y="3" width="3" height="3" fill="#e00000"/><rect x="1" y="8" width="6" height="7" fill="#ee1010"/><circle cx="9.500" cy="9" r="3.600" fill="#fff" stroke="#111" stroke-width="1.200"/><path d="M12 11.500L15 14.500" stroke="#7a3a10" stroke-width="1.800"/></svg>
<svg class="abs" style="left:286px;top:6px" width="16" height="16" viewBox="0 0 16 16"><rect x="3" y="1" width="11" height="5" fill="#b9b7cf"/><path d="M1 8L7 11.500L1 15Z" fill="#b4b2ca"/><circle cx="10" cy="10" r="3.500" fill="#e4e4ef" stroke="#b4b2ca"/></svg>
<svg class="abs" style="left:308px;top:6px" width="16" height="16" viewBox="0 0 16 16"><rect x="3" y="1" width="11" height="5" fill="#b9b7cf"/><rect x="1" y="8" width="6" height="6" fill="#b4b2ca"/><circle cx="10" cy="10" r="3.500" fill="#e4e4ef" stroke="#b4b2ca"/></svg>
<svg class="abs" style="left:336px;top:6px" width="16" height="16" viewBox="0 0 16 16"><rect x="0" y="1" width="12" height="6" fill="#444"/><rect x="0" y="1" width="3" height="6" fill="#e00000"/><path d="M5.500 1V7M8 1V7" stroke="#999" stroke-width=".9"/><rect x="0" y="8" width="15" height="8" fill="#1a78e6"/><text x="7.500" y="15.500" font-family="Liberation Sans,sans-serif" font-size="8.500" font-weight="bold" fill="#fff" text-anchor="middle" textLength="13" lengthAdjust="spacingAndGlyphs">Dev</text><circle cx="10.500" cy="5.500" r="3" fill="#fff" stroke="#111" stroke-width="1.100"/><path d="M12.500 8L15 10.500" stroke="#7a3a10" stroke-width="1.600"/></svg>
<svg class="abs" style="left:358px;top:6px" width="16" height="16" viewBox="0 0 16 16"><rect x="0" y="1" width="12" height="6" fill="#444"/><rect x="0" y="1" width="3" height="6" fill="#e00000"/><path d="M5.500 1V7M8 1V7" stroke="#999" stroke-width=".9"/><rect x="0" y="8" width="15" height="8" fill="#1a78e6"/><text x="7.500" y="15.500" font-family="Liberation Sans,sans-serif" font-size="8.500" font-weight="bold" fill="#fff" text-anchor="middle" textLength="13" lengthAdjust="spacingAndGlyphs">Dev</text><path d="M8 7L13 2L15.500 4.500L10.500 9Z" fill="#2fc030" stroke="#156015" stroke-width=".6"/><path d="M8 7L10.500 9L7.500 9.800Z" fill="#f0d020"/></svg>
<svg class="abs" style="left:386px;top:6px" width="16" height="16" viewBox="0 0 16 16"><path d="M5.500 1.500H14.500V9.500H10L8 12V9.500H5.500Z" fill="#fff" stroke="#555"/><path d="M7 4H13M7 6.500H13" stroke="#777" stroke-width=".9"/><path d="M2 7H7V10.500H5.500V12.500H8L4.500 16L1 12.500H3.500V10.500H2Z" fill="#ff8c00" stroke="#c05000" stroke-width=".5" transform="translate(-0.500 -1)"/></svg>
<svg class="abs" style="left:408px;top:6px" width="16" height="16" viewBox="0 0 16 16"><rect x="6" y="5" width="8" height="6" fill="#444"/><rect x="3" y="5" width="3" height="4" fill="#e00000"/><path d="M8 0.500L11.500 3L8 5.500ZM11.500 0.500L15 3L11.500 5.500Z" fill="#10b020"/><path d="M0 10.500H7V8L12 12L7 16V13.500H0Z" fill="#f02000"/></svg>
<svg class="abs" style="left:430px;top:6px" width="16" height="16" viewBox="0 0 16 16"><path d="M7.500 1.500H15V7.500H7.500Z" fill="#eee" stroke="#777"/><path d="M5 3.500H13V10.500H9.500L8 12.500V10.500H5Z" fill="#fff" stroke="#666"/><path d="M2 7H7V10.500H5.500V12.500H8L4.500 16L1 12.500H3.500V10.500H2Z" fill="#ff8c00" stroke="#c05000" stroke-width=".5" transform="translate(-0.500 -1)"/></svg>
<svg class="abs" style="left:458px;top:6px" width="16" height="16" viewBox="0 0 16 16"><rect x="1.500" y="1.500" width="11" height="8" fill="#3aa0ee" stroke="#333"/><rect x="3" y="3" width="8" height="5" fill="#8fd0ff"/><rect x="5" y="10" width="4" height="2" fill="#444"/><rect x="3" y="12" width="9" height="1.500" fill="#333"/><rect x="11" y="10" width="4.500" height="5.500" rx="1.500" fill="#777" stroke="#333" stroke-width=".7"/></svg>
<div class="sep" style="left:118px"></div>
<div class="sep" style="left:191px"></div>
<div class="sep" style="left:329px"></div>
<div class="sep" style="left:379px"></div>
<div class="sep" style="left:451px"></div>

<div class="cap"><svg class="abs" style="left:2px;top:16px" width="8" height="9" viewBox="0 0 8 9"><path d="M1 1.500H7" stroke="#111" stroke-width="1.400"/><path d="M1 2.500H7" stroke="#fff" stroke-width=".8" transform="translate(0.800 0.800)"/><path d="M1 4.500H7L4 8Z" fill="#111"/><path d="M7.200 4.700L4.400 8.200" stroke="#fff" stroke-width=".8"/></svg></div>
</div>
<div class="abs tb" style="left:913px;top:51px;width:186px">
<div class="grip"></div>
<svg class="abs" style="left:10px;top:6px" width="16" height="16" viewBox="0 0 16 16"><rect x="2" y="1" width="13" height="13" fill="#fff"/><path d="M2.500 1V14M1 13.500H14" stroke="#111" stroke-width="1" fill="none"/><path d="M7.500 3V13M4 9.500H13" stroke="#111" stroke-width="1"/><path d="M4.500 9C5.500 7 6 3.500 7 3.500H8C9 3.500 9.500 7 10.500 9" stroke="#f01010" stroke-width="1.200" fill="none"/><rect x="10" y="11" width="4" height="1.800" fill="#555"/><path d="M0 9.500L6 12.500L0 15.500Z" fill="#10901c"/></svg>
<svg class="abs" style="left:32px;top:6px" width="16" height="16" viewBox="0 0 16 16"><rect x="2" y="1" width="13" height="13" fill="#fff"/><path d="M2.500 1V14M1 13.500H14" stroke="#111" stroke-width="1" fill="none"/><path d="M7.500 2V13M3 7.500H14" stroke="#111" stroke-width="1"/><rect x="5.500" y="5.500" width="4" height="4" fill="none" stroke="#f01010" stroke-width="1.200"/><rect x="10" y="11" width="4" height="1.800" fill="#555"/><path d="M0 9.500L6 12.500L0 15.500Z" fill="#10901c"/></svg>
<svg class="abs" style="left:54px;top:6px" width="16" height="16" viewBox="0 0 16 16"><path d="M1 6.500H3.500V1.500H6.500V6.500H9.500V1.500H12.500V6.500H15" stroke="#111" stroke-width="1.100" fill="none"/><rect x="12" y="9" width="3" height="6.500" fill="#888" stroke="#222" stroke-width=".8"/><path d="M0 9.500L6 12.500L0 15.500Z" fill="#10901c"/></svg>
<svg class="abs" style="left:82px;top:6px" width="16" height="16" viewBox="0 0 16 16"><rect x="6" y="1" width="8" height="12" fill="#999"/><path d="M6 1.500H14" stroke="#222" stroke-width="1.400"/><circle cx="9.500" cy="9.500" r="3.200" fill="#fff" stroke="#111" stroke-width="1.100"/><path d="M12 12L15 15" stroke="#c01010" stroke-width="1.500"/><circle cx="13.500" cy="3.500" r=".9" fill="#e01010"/><path d="M0 9.500L6 12.500L0 15.500Z" fill="#10901c"/></svg>
<svg class="abs" style="left:104px;top:6px" width="16" height="16" viewBox="0 0 16 16"><rect x="6" y="1.500" width="9.500" height="7" fill="#111"/><path d="M9 7L13.500 3" stroke="#e0c020" stroke-width="1.200"/><path d="M2 5H6" stroke="#555" stroke-width="1.500"/><path d="M1 9L8 12.500L1 16Z" fill="#10901c" transform="translate(1 -1)"/></svg>
<svg class="abs" style="left:132px;top:6px" width="16" height="16" viewBox="0 0 16 16"><path d="M3.500 1V14M2 13.500H15M4 12L9 3H14" stroke="#b9b7cf" stroke-width="1.200" fill="none"/><rect x="8" y="8" width="2" height="5" fill="#c5c3d9"/><rect x="11.500" y="4" width="2" height="9" fill="#c5c3d9"/><path d="M0 9.500L5 12L0 14.500Z" fill="#b4b2ca"/></svg>
<svg class="abs" style="left:154px;top:6px" width="16" height="16" viewBox="0 0 16 16"><rect x="2" y="1" width="13" height="13" fill="#fff"/><path d="M2.500 1V14M1 13.500H14" stroke="#111" stroke-width="1" fill="none"/><path d="M3 12L8 2.500" stroke="#111" stroke-width="1.200" fill="none"/><path d="M7.500 12C8.500 8 9.500 3.500 11 3.500C12.500 3.500 13.500 8 14.500 12" stroke="#10808c" stroke-width="1.200" fill="none"/><rect x="10" y="11" width="3" height="2" fill="#444"/><path d="M0 9.500L6 12.500L0 15.500Z" fill="#10901c"/></svg>
<div class="sep" style="left:74px"></div>
<div class="sep" style="left:125px"></div>

<div class="cap"><svg class="abs" style="left:2px;top:16px" width="8" height="9" viewBox="0 0 8 9"><path d="M1 1.500H7" stroke="#111" stroke-width="1.400"/><path d="M1 2.500H7" stroke="#fff" stroke-width=".8" transform="translate(0.800 0.800)"/><path d="M1 4.500H7L4 8Z" fill="#111"/><path d="M7.200 4.700L4.400 8.200" stroke="#fff" stroke-width=".8"/></svg></div>
</div>
<!-- toolbars row 2 -->
<div class="abs tb" style="left:2px;top:79px;width:718px">
<div class="grip"></div>
<div class="abs" style="left:273px;top:9px;width:7px;height:10px;background:#333;border-radius:1px"></div>
<div class="sep" style="left:281px"></div>
<div class="abs" style="left:285px;top:3px;width:198px;height:21px;background:#fff"><div class="abs" style="left:3px;top:4px;font-size:12px">参数</div><div class="abs" style="left:185px;top:0;width:13px;height:21px;background:linear-gradient(to bottom,#f2f2f8,#c4c3d9)"></div><div class="abs" style="left:187.500px;top:9px;width:0;height:0;border-top:4px solid #000;border-left:4px solid transparent;border-right:4px solid transparent"></div></div>
<div class="abs" style="left:485px;top:3px;width:198px;height:21px;background:#fff"><div class="abs" style="left:3px;top:4px;font-size:12px"></div><div class="abs" style="left:185px;top:0;width:13px;height:21px;background:linear-gradient(to bottom,#f2f2f8,#c4c3d9)"></div><div class="abs" style="left:187.500px;top:9px;width:0;height:0;border-top:4px solid #000;border-left:4px solid transparent;border-right:4px solid transparent"></div></div>
<svg class="abs" style="left:688px;top:5px" width="18" height="18" viewBox="0 0 18 18"><path d="M2.500 1.500H10L13.500 5V16.500H2.500Z" fill="#fff" stroke="#222"/><circle cx="11" cy="6" r="3.300" fill="#eef" stroke="#222" stroke-width="1.100"/><path d="M13.500 8.500L16.500 11.500" stroke="#8a4a1a" stroke-width="1.700"/></svg>
<div class="cap"><svg class="abs" style="left:2px;top:16px" width="8" height="9" viewBox="0 0 8 9"><path d="M1 1.500H7" stroke="#111" stroke-width="1.400"/><path d="M1 2.500H7" stroke="#fff" stroke-width=".8" transform="translate(0.800 0.800)"/><path d="M1 4.500H7L4 8Z" fill="#111"/><path d="M7.200 4.700L4.400 8.200" stroke="#fff" stroke-width=".8"/></svg></div>
</div>
<div class="abs tb" style="left:724px;top:79px;width:916px">
<div class="grip"></div>
<svg class="abs" style="left:7px;top:5px" width="22" height="18" viewBox="0 0 22 18"><g stroke="#000" stroke-width="1" fill="none"><path d="M3 5.500H8.500M8.500 2V9M13.500 2V9M13.500 5.500H19" /></g><text x="11" y="15.500" font-family="Liberation Sans,sans-serif" font-size="9" text-anchor="middle" textLength="10.5" stroke="#000" stroke-width=".15" lengthAdjust="spacingAndGlyphs" fill="#000">F5</text></svg>
<svg class="abs" style="left:29px;top:5px" width="22" height="18" viewBox="0 0 22 18"><g stroke="#000" stroke-width="1" fill="none"><path d="M4.500 2V5.500H8.500M8.500 2V9M13.500 2V9M13.500 5.500H17.500V2" /></g><text x="11" y="15.500" font-family="Liberation Sans,sans-serif" font-size="9" text-anchor="middle" textLength="15" stroke="#000" stroke-width=".15" lengthAdjust="spacingAndGlyphs" fill="#000">sF5</text></svg>
<svg class="abs" style="left:51px;top:5px" width="22" height="18" viewBox="0 0 22 18"><g stroke="#000" stroke-width="1" fill="none"><path d="M3 5.500H8.500M8.500 2V9M13.500 2V9M13.500 5.500H19M7 9L15 2" /></g><text x="11" y="15.500" font-family="Liberation Sans,sans-serif" font-size="9" text-anchor="middle" textLength="10.5" stroke="#000" stroke-width=".15" lengthAdjust="spacingAndGlyphs" fill="#000">F6</text></svg>
<svg class="abs" style="left:73px;top:5px" width="22" height="18" viewBox="0 0 22 18"><g stroke="#000" stroke-width="1" fill="none"><path d="M4.500 2V5.500H8.500M8.500 2V9M13.500 2V9M13.500 5.500H17.500V2M7 9L15 2" /></g><text x="11" y="15.500" font-family="Liberation Sans,sans-serif" font-size="9" text-anchor="middle" textLength="15" stroke="#000" stroke-width=".15" lengthAdjust="spacingAndGlyphs" fill="#000">sF6</text></svg>
<svg class="abs" style="left:95px;top:5px" width="22" height="18" viewBox="0 0 22 18"><g stroke="#000" stroke-width="1" fill="none"><path d="M3 5.500H6.500M15.500 5.500H19M9.500 2C7 3.500 7 7.500 9.500 9M12.500 2C15 3.500 15 7.500 12.500 9" /></g><text x="11" y="15.500" font-family="Liberation Sans,sans-serif" font-size="9" text-anchor="middle" textLength="10.5" stroke="#000" stroke-width=".15" lengthAdjust="spacingAndGlyphs" fill="#000">F7</text></svg>
<svg class="abs" style="left:117px;top:5px" width="22" height="18" viewBox="0 0 22 18"><g stroke="#000" stroke-width="1" fill="none"><path d="M3 5.500H6.500M15.500 5.500H19M9.500 2H6.500V9H9.500M12.500 2H15.500V9H12.500" /></g><text x="11" y="15.500" font-family="Liberation Sans,sans-serif" font-size="9" text-anchor="middle" textLength="10.5" stroke="#000" stroke-width=".15" lengthAdjust="spacingAndGlyphs" fill="#000">F8</text></svg>
<svg class="abs" style="left:145px;top:5px" width="22" height="18" viewBox="0 0 22 18"><g stroke="#000" stroke-width="1" fill="none"><path d="M3 5.500H19" /></g><text x="11" y="15.500" font-family="Liberation Sans,sans-serif" font-size="9" text-anchor="middle" textLength="10.5" stroke="#000" stroke-width=".15" lengthAdjust="spacingAndGlyphs" fill="#000">F9</text></svg>
<svg class="abs" style="left:167px;top:5px" width="22" height="18" viewBox="0 0 22 18"><g stroke="#000" stroke-width="1" fill="none"><path d="M10.500 2V9" /></g><text x="11" y="15.500" font-family="Liberation Sans,sans-serif" font-size="9" text-anchor="middle" textLength="15" stroke="#000" stroke-width=".15" lengthAdjust="spacingAndGlyphs" fill="#000">sF9</text></svg>
<svg class="abs" style="left:189px;top:5px" width="22" height="18" viewBox="0 0 22 18"><g stroke="#000" stroke-width="1" fill="none"><path d="M3 5.500H19" /><path d="M7 1.500L15 9.500M15 1.500L7 9.500" stroke="#f00000" stroke-width="1.500"/></g><text x="11" y="15.500" font-family="Liberation Sans,sans-serif" font-size="9" text-anchor="middle" textLength="15" stroke="#000" stroke-width=".15" lengthAdjust="spacingAndGlyphs" fill="#000">cF9</text></svg>
<svg class="abs" style="left:211px;top:5px" width="22" height="18" viewBox="0 0 22 18"><g stroke="#000" stroke-width="1" fill="none"><path d="M10.500 2V9" /><path d="M7 1.500L15 9.500M15 1.500L7 9.500" stroke="#f00000" stroke-width="1.500"/></g><text x="11" y="15.500" font-family="Liberation Sans,sans-serif" font-size="9" text-anchor="middle" textLength="16.5" stroke="#000" stroke-width=".15" lengthAdjust="spacingAndGlyphs" fill="#000">cF10</text></svg>
<svg class="abs" style="left:239px;top:5px" width="22" height="18" viewBox="0 0 22 18"><g stroke="#000" stroke-width="1" fill="none"><path d="M3.500 5.500H7.500M7.500 2V9M13.500 2V9M13.500 5.500H17.500M10.500 9V2M8.500 4.500L10.500 2L12.500 4.500" /></g><text x="11" y="15.500" font-family="Liberation Sans,sans-serif" font-size="9" text-anchor="middle" textLength="15" stroke="#000" stroke-width=".15" lengthAdjust="spacingAndGlyphs" fill="#000">sF7</text></svg>
<svg class="abs" style="left:261px;top:5px" width="22" height="18" viewBox="0 0 22 18"><g stroke="#000" stroke-width="1" fill="none"><path d="M3.500 5.500H7.500M7.500 2V9M13.500 2V9M13.500 5.500H17.500M10.500 2V9M8.500 6.500L10.500 9L12.500 6.500" /></g><text x="11" y="15.500" font-family="Liberation Sans,sans-serif" font-size="9" text-anchor="middle" textLength="15" stroke="#000" stroke-width=".15" lengthAdjust="spacingAndGlyphs" fill="#000">sF8</text></svg>
<svg class="abs" style="left:283px;top:5px" width="22" height="18" viewBox="0 0 22 18"><g stroke="#000" stroke-width="1" fill="none"><path d="M4.500 2V5.500H7.500M7.500 2V9M13.500 2V9M13.500 5.500H16.500V2M10.500 9V2M8.500 4.500L10.500 2L12.500 4.500" /></g><text x="11" y="15.500" font-family="Liberation Sans,sans-serif" font-size="9" text-anchor="middle" textLength="15" stroke="#000" stroke-width=".15" lengthAdjust="spacingAndGlyphs" fill="#000">aF7</text></svg>
<svg class="abs" style="left:305px;top:5px" width="22" height="18" viewBox="0 0 22 18"><g stroke="#000" stroke-width="1" fill="none"><path d="M4.500 2V5.500H7.500M7.500 2V9M13.500 2V9M13.500 5.500H16.500V2M10.500 2V9M8.500 6.500L10.500 9L12.500 6.500" /></g><text x="11" y="15.500" font-family="Liberation Sans,sans-serif" font-size="9" text-anchor="middle" textLength="15" stroke="#000" stroke-width=".15" lengthAdjust="spacingAndGlyphs" fill="#000">aF8</text></svg>
<svg class="abs" style="left:333px;top:5px" width="22" height="18" viewBox="0 0 22 18"><g stroke="#000" stroke-width="1" fill="none"><path d="M3.500 5.500H7.500M7.500 2V9M13.500 2V9M13.500 5.500H17.500M10.500 9V2M8.500 4.500L10.500 2L12.500 4.500M6 8.500L15 2.500" /></g><text x="11" y="15.500" font-family="Liberation Sans,sans-serif" font-size="9" text-anchor="middle" textLength="16.5" stroke="#000" stroke-width=".15" lengthAdjust="spacingAndGlyphs" fill="#000">saF5</text></svg>
<svg class="abs" style="left:355px;top:5px" width="22" height="18" viewBox="0 0 22 18"><g stroke="#000" stroke-width="1" fill="none"><path d="M3.500 5.500H7.500M7.500 2V9M13.500 2V9M13.500 5.500H17.500M10.500 2V9M8.500 6.500L10.500 9L12.500 6.500M6 8.500L15 2.500" /></g><text x="11" y="15.500" font-family="Liberation Sans,sans-serif" font-size="9" text-anchor="middle" textLength="16.5" stroke="#000" stroke-width=".15" lengthAdjust="spacingAndGlyphs" fill="#000">saF6</text></svg>
<svg class="abs" style="left:377px;top:5px" width="22" height="18" viewBox="0 0 22 18"><g stroke="#000" stroke-width="1" fill="none"><path d="M4.500 2V5.500H7.500M7.500 2V9M13.500 2V9M13.500 5.500H16.500V2M10.500 9V2M8.500 4.500L10.500 2L12.500 4.500M6 8.500L15 2.500" /></g><text x="11" y="15.500" font-family="Liberation Sans,sans-serif" font-size="9" text-anchor="middle" textLength="16.5" stroke="#000" stroke-width=".15" lengthAdjust="spacingAndGlyphs" fill="#000">saF7</text></svg>
<svg class="abs" style="left:399px;top:5px" width="22" height="18" viewBox="0 0 22 18"><g stroke="#000" stroke-width="1" fill="none"><path d="M4.500 2V5.500H7.500M7.500 2V9M13.500 2V9M13.500 5.500H16.500V2M10.500 2V9M8.500 6.500L10.500 9L12.500 6.500M6 8.500L15 2.500" /></g><text x="11" y="15.500" font-family="Liberation Sans,sans-serif" font-size="9" text-anchor="middle" textLength="16.5" stroke="#000" stroke-width=".15" lengthAdjust="spacingAndGlyphs" fill="#000">saF8</text></svg>
<svg class="abs" style="left:427px;top:5px" width="22" height="18" viewBox="0 0 22 18"><g stroke="#000" stroke-width="1" fill="none"><path d="M10.500 9V2M8.500 4.500L10.500 2L12.500 4.500" /></g><text x="11" y="15.500" font-family="Liberation Sans,sans-serif" font-size="9" text-anchor="middle" textLength="15" stroke="#000" stroke-width=".15" lengthAdjust="spacingAndGlyphs" fill="#000">aF5</text></svg>
<svg class="abs" style="left:449px;top:5px" width="22" height="18" viewBox="0 0 22 18"><g stroke="#000" stroke-width="1" fill="none"><path d="M10.500 2V9M8.500 6.500L10.500 9L12.500 6.500" /></g><text x="11" y="15.500" font-family="Liberation Sans,sans-serif" font-size="9" text-anchor="middle" textLength="16.5" stroke="#000" stroke-width=".15" lengthAdjust="spacingAndGlyphs" fill="#000">caF5</text></svg>
<svg class="abs" style="left:471px;top:5px" width="22" height="18" viewBox="0 0 22 18"><g stroke="#000" stroke-width="1" fill="none"><path d="M3 6.500H19M8 8.500L15 3" /></g><text x="11" y="15.500" font-family="Liberation Sans,sans-serif" font-size="9" text-anchor="middle" textLength="18" stroke="#000" stroke-width=".15" lengthAdjust="spacingAndGlyphs" fill="#000">caF10</text></svg>
<svg class="abs" style="left:493px;top:5px" width="22" height="18" viewBox="0 0 22 18"><g stroke="#000" stroke-width="1" fill="none"><path d="M4.500 3.500V8.500H18" /></g><text x="11" y="15.500" font-family="Liberation Sans,sans-serif" font-size="9" text-anchor="middle" textLength="15" stroke="#000" stroke-width=".15" lengthAdjust="spacingAndGlyphs" fill="#000">F10</text></svg>
<svg class="abs" style="left:515px;top:5px" width="22" height="18" viewBox="0 0 22 18"><g stroke="#000" stroke-width="1" fill="none"><path d="M4 2.500H8M6 2.500V8.500M4 8.500H8M15 2.500H18M15 8.500H18" /><path d="M7 1.500L15 9.500M15 1.500L7 9.500" stroke="#f00000" stroke-width="1.500"/></g><text x="11" y="15.500" font-family="Liberation Sans,sans-serif" font-size="9" text-anchor="middle" textLength="15" stroke="#000" stroke-width=".15" lengthAdjust="spacingAndGlyphs" fill="#000">aF9</text></svg>
<div class="sep" style="left:141px"></div>
<div class="sep" style="left:235px"></div>
<div class="sep" style="left:329px"></div>
<div class="sep" style="left:423px"></div>
<div class="sep" style="left:538px"></div>
<div class="sep" style="left:567px"></div>
<div class="sep" style="left:638px"></div>
<div class="sep" style="left:667px"></div>
<div class="sep" style="left:695px"></div>
<div class="sep" style="left:767px"></div>
<div class="abs" style="left:794px;top:2px;width:21px;height:22px;background:#fbb35c;border:1px solid #4d4b78"></div>
<svg class="abs" style="left:546px;top:6px" width="16" height="16" viewBox="0 0 16 16"><rect x="2.500" y="1.500" width="11" height="13" fill="#fff" stroke="#111"/><path d="M0 5V11M16 5V11M0 8H2.500M13.500 8H16" stroke="#111" stroke-width="1"/><text x="8" y="11.500" font-family="Liberation Sans,sans-serif" font-size="9" font-weight="bold" fill="#1010e0" text-anchor="middle" textLength="9" lengthAdjust="spacingAndGlyphs">ST</text></svg>
<svg class="abs" style="left:574px;top:6px" width="16" height="16" viewBox="0 0 16 16"><path d="M1 4.500H5.500M5.500 1V8M10.500 1V8M10.500 4.500H15" stroke="#111" fill="none"/><path d="M3 9.500H10Q12 9.500 12 11.500Q12 13.500 10 13.500H3Q1 13.500 1 11.500Q1 9.500 3 9.500Z" fill="#fff" stroke="#555" stroke-width=".9"/><path transform="translate(0 4)" d="M8 7.500L12.500 3L15 5.500L10.500 10Z" fill="#35c030" stroke="#1a6a18" stroke-width=".6"/><path transform="translate(0 4)" d="M8 7.500L10.500 10L7.300 10.800Z" fill="#f2d020"/></svg>
<svg class="abs" style="left:596px;top:6px" width="16" height="16" viewBox="0 0 16 16"><path d="M3.500 1.500H12.500Q14.500 1.500 14.500 3.500V5Q14.500 7 12.500 7H8L6 9V7H3.500Q1.500 7 1.500 5V3.500Q1.500 1.500 3.500 1.500Z" fill="#fff" stroke="#555" stroke-width=".9"/><path d="M8 7.500L12.500 3L15 5.500L10.500 10Z" fill="#35c030" stroke="#1a6a18" stroke-width=".6"/><path d="M8 7.500L10.500 10L7.300 10.800Z" fill="#f2d020"/><path d="M1 3.500H3M0.500 13.500H3.500M3.500 11V16M6 11V16M6 13.500H8.500M13 13.500H15.500" stroke="#111" fill="none"/><circle cx="10.800" cy="13.500" r="2" fill="none" stroke="#111"/></svg>
<svg class="abs" style="left:618px;top:6px" width="16" height="16" viewBox="0 0 16 16"><path d="M3.500 1.500H12.500Q14.500 1.500 14.500 3.500V5Q14.500 7 12.500 7H8L6 9V7H3.500Q1.500 7 1.500 5V3.500Q1.500 1.500 3.500 1.500Z" fill="#fff" stroke="#555" stroke-width=".9"/><path d="M8 7.500L12.500 3L15 5.500L10.500 10Z" fill="#35c030" stroke="#1a6a18" stroke-width=".6"/><path d="M8 7.500L10.500 10L7.300 10.800Z" fill="#f2d020"/><path d="M1 13.500H4M12 13.500H15M6.500 11C5 12 5 15 6.500 16M9.500 11C11 12 11 15 9.500 16" stroke="#111" fill="none"/></svg>
<svg class="abs" style="left:646px;top:6px" width="16" height="16" viewBox="0 0 16 16"><path d="M3.500 1.500H12.500Q14.500 1.500 14.500 3.500V5Q14.500 7 12.500 7H8L6 9V7H3.500Q1.500 7 1.500 5V3.500Q1.500 1.500 3.500 1.500Z" fill="#fff" stroke="#555" stroke-width=".9"/><path d="M8 7.500L12.500 3L15 5.500L10.500 10Z" fill="#35c030" stroke="#1a6a18" stroke-width=".6"/><path d="M8 7.500L10.500 10L7.300 10.800Z" fill="#f2d020"/><path d="M1 3.500H3M0 12.500H2.500M2.500 10V15M5 10V15M5 12.500H7" stroke="#111" fill="none"/><rect x="7" y="9" width="8.500" height="6.500" fill="#fff" stroke="#1a1ab0" stroke-width=".9"/><path d="M7 11.200H15.500M7 13.400H15.500M10 9V15.500" stroke="#1a1ab0" stroke-width=".8"/><rect x="7" y="9" width="8.500" height="2" fill="#209040"/></svg>
<svg class="abs" style="left:674px;top:6px" width="16" height="16" viewBox="0 0 16 16"><path d="M3.500 1.500H12.500Q14.500 1.500 14.500 3.500V5Q14.500 7 12.500 7H8L6 9V7H3.500Q1.500 7 1.500 5V3.500Q1.500 1.500 3.500 1.500Z" fill="#fff" stroke="#555" stroke-width=".9"/><path d="M1 3.500H3M0 12.500H2.500M2.500 10V15M5 10V15M5 12.500H7" stroke="#111" fill="none"/><rect x="7" y="9" width="8.500" height="6.500" fill="#fff" stroke="#1a1ab0" stroke-width=".9"/><path d="M7 11.200H15.500M7 13.400H15.500M10 9V15.500" stroke="#1a1ab0" stroke-width=".8"/><rect x="7" y="9" width="8.500" height="2" fill="#209040"/></svg>
<svg class="abs" style="left:702px;top:6px" width="16" height="16" viewBox="0 0 16 16"><rect x="2.500" y="1.500" width="10" height="12" fill="#e2e1ed" stroke="#b9b7cf"/><path d="M4 4H11M4 6.500H11M4 9H11M4 11.500H9" stroke="#b9b7cf"/><rect x="10" y="7" width="4.500" height="6" fill="#d2d1e2" stroke="#b9b7cf" stroke-width=".8"/></svg>
<svg class="abs" style="left:724px;top:6px" width="16" height="16" viewBox="0 0 16 16"><rect x="5" y="1.500" width="8" height="8" fill="#e2e1ed" stroke="#b9b7cf"/><circle cx="9.500" cy="9" r="3.800" fill="#eeeef6" stroke="#b9b7cf" stroke-width="1.200"/><path d="M12.500 12L15 14.500" stroke="#b9b7cf" stroke-width="1.600"/><path d="M0.500 9L5 5.500V12.500Z" fill="#c0bed6"/></svg>
<svg class="abs" style="left:746px;top:6px" width="16" height="16" viewBox="0 0 16 16"><rect x="5" y="1.500" width="8" height="8" fill="#e2e1ed" stroke="#b9b7cf"/><circle cx="10.500" cy="9" r="3.800" fill="#eeeef6" stroke="#b9b7cf" stroke-width="1.200"/><path d="M13.500 12L16 14.500" stroke="#b9b7cf" stroke-width="1.600"/><path d="M5.500 9L1 5.500V12.500Z" fill="#c0bed6"/></svg>
<svg class="abs" style="left:774px;top:6px" width="16" height="16" viewBox="0 0 16 16"><path d="M1 3.500H6M1 9.500H6M5.500 1.500V5.500M5.500 7.500V11.500M7.500 1.500V5.500M7.500 7.500V11.500" stroke="#1414d8" fill="none"/><path d="M7.500 3.500H15M7.500 9.500H10.500" stroke="#1414d8" stroke-dasharray="2 1" fill="none"/><path d="M10.500 9.500V14.500H15M10.500 12H15" stroke="#1414d8" stroke-dasharray="2 1" fill="none"/></svg>
<svg class="abs" style="left:796px;top:6px" width="16" height="16" viewBox="0 0 16 16"><path d="M1 3.500H6M1 9.500H6M5.500 1.500V5.500M5.500 7.500V11.500M7.500 1.500V5.500M7.500 7.500V11.500" stroke="#1414d8" fill="none"/><path d="M7.500 3.500H15M7.500 9.500H10.500" stroke="#1414d8" stroke-dasharray="2 1" fill="none"/><path d="M10.500 9.500V14.500H15M10.500 12H15" stroke="#1414d8" stroke-dasharray="2 1" fill="none"/><path d="M7 6L12.500 0.500L15 3L9.500 8.500Z" fill="#e01818"/><path d="M7 6L9.500 8.500L6.300 9.200Z" fill="#f2d020"/></svg>
<svg class="abs" style="left:818px;top:6px" width="16" height="16" viewBox="0 0 16 16"><rect x="1" y="10" width="6" height="5" fill="#222"/><rect x="1" y="10" width="2" height="5" fill="#e01010"/><rect x="3.500" y="11" width="3" height="3" fill="#ddd"/><circle cx="9" cy="6.500" r="4.800" fill="#fff" stroke="#1414d8" stroke-width="1.200"/><path d="M6.500 4.500H11.500M6.500 6.500H11.500M6.500 8.500H11.500" stroke="#555" stroke-width=".8"/><path d="M12.500 10L15.500 14" stroke="#1414d8" stroke-width="1.400"/></svg>
<svg class="abs" style="left:840px;top:6px" width="16" height="16" viewBox="0 0 16 16"><rect x="1" y="10" width="6" height="5" fill="#222"/><rect x="1" y="10" width="2" height="5" fill="#e01010"/><rect x="3.500" y="11" width="3" height="3" fill="#ddd"/><circle cx="8.500" cy="7" r="4.500" fill="#fff" stroke="#1414d8" stroke-width="1.200"/><path d="M12 10.500L15.500 14" stroke="#1414d8" stroke-width="1.400"/><path d="M8 6L13 1L15.500 3.500L10.500 8.500Z" fill="#e01818"/><path d="M8 6L10.500 8.500L7.300 9.200Z" fill="#f2d020"/></svg>
<svg class="abs" style="left:862px;top:6px" width="16" height="16" viewBox="0 0 16 16"><rect x="0" y="1" width="14" height="8" fill="#1a78e6"/><text x="7" y="8" font-family="Liberation Sans,sans-serif" font-size="8" font-weight="bold" fill="#fff" text-anchor="middle" textLength="12" lengthAdjust="spacingAndGlyphs">Dev</text><circle cx="9.500" cy="10" r="3.500" fill="#fff" stroke="#111" stroke-width="1.200"/><path d="M12 12.500L15 15.500" stroke="#7a3a10" stroke-width="1.800"/></svg>
<svg class="abs" style="left:884px;top:6px" width="16" height="16" viewBox="0 0 16 16"><circle cx="7" cy="7" r="5.500" fill="#fff" stroke="#0a0a50" stroke-width="1.800"/><path d="M3.500 5.500H7.500M5.500 3.500V7.500M6.500 8.500H10.500" stroke="#000" stroke-width="1.600"/><path d="M11 11L15 15" stroke="#c01818" stroke-width="1.800"/></svg>
<div class="cap"><svg class="abs" style="left:2px;top:16px" width="8" height="9" viewBox="0 0 8 9"><path d="M1 1.500H7" stroke="#111" stroke-width="1.400"/><path d="M1 2.500H7" stroke="#fff" stroke-width=".8" transform="translate(0.800 0.800)"/><path d="M1 4.500H7L4 8Z" fill="#111"/><path d="M7.200 4.700L4.400 8.200" stroke="#fff" stroke-width=".8"/></svg></div>
</div>
<!-- document tabs -->
<div class="dtab" style="left:274px;width:200px">
 <svg class="abs" style="left:0;top:0" width="200" height="23" viewBox="0 0 200 23"><defs><linearGradient id="tg1" x1="0" y1="0" x2="0" y2="1"><stop offset="0" stop-color="#f4f4fa"/><stop offset="1" stop-color="#d9d9e8"/></linearGradient><linearGradient id="tg2" x1="0" y1="0" x2="0" y2="1"><stop offset="0" stop-color="#fff6e6"/><stop offset=".5" stop-color="#fdd9a4"/><stop offset="1" stop-color="#fbb45c"/></linearGradient></defs>
 <path d="M0 18.500L16 3Q18.500 0.500 22 0.500H196L199.500 3.500" fill="none"/>
 <path d="M-2 20.500L17 2.500Q19 0.500 22 0.500H195Q198 0.500 199.500 3L185 22.500H-2Z" fill="url(#tg1)"/>
 <path d="M-2 20.500L17 2.500Q19 0.500 22 0.500H195Q198 0.500 199.500 3" fill="none" stroke="#1c4aa8" stroke-width="1"/></svg>
 <svg class="abs" style="left:21px;top:4px" width="18" height="18" viewBox="0 0 18 18"><path d="M2 2L10 0.500L11 10L3 12Z" fill="#48b8f0" stroke="#a8c8e8" stroke-width=".8"/><path d="M3 12L5 14.500H9" stroke="#ccd" fill="none"/><rect x="6.500" y="7.500" width="10" height="8" fill="#fff" stroke="#3a3aee" stroke-width="1.200"/><path d="M6.500 10.200H16.500M6.500 12.800H16.500M10 7.500V15.500" stroke="#3a3aee" stroke-width="1"/></svg>
 <span style="left:41px">局部标签设置 MAIN [PRG]</span>
</div>
<div class="dtab" style="left:455px;width:199px">
 <svg class="abs" style="left:0;top:0" width="199" height="24" viewBox="0 0 199 24">
 <path d="M0 23L20 3Q22 0.500 25.500 0.500H192Q195.500 0.500 195.500 4V23Z" fill="url(#tg2)"/>
 <path d="M0 22.500L20 3Q22 0.500 25.500 0.500H192Q195.500 0.500 195.500 4V22.500" fill="none" stroke="#1c4aa8" stroke-width="1"/></svg>
 <svg class="abs" style="left:27px;top:4px" width="14" height="16" viewBox="0 0 14 16"><path d="M1.500 0.500H9L12.500 4V15.500H1.500Z" fill="#fff" stroke="#777"/><path d="M9 0.500V4H12.500" fill="#ddd" stroke="#777" stroke-width=".8"/><path d="M2.500 9.500H5.500M5.500 7V12M8.500 7V12M8.500 9.500H11.500" stroke="#e01010" stroke-width="1.300" fill="none"/></svg>
 <span style="left:46px;font-weight:bold;letter-spacing:.25px">[PRG]写入 MAIN 1步</span>
 <div class="abs" style="left:175px;top:3px;width:16px;height:16px;background:#fffdf6;border:1px solid #dccdb0"></div>
 <svg class="abs" style="left:178.500px;top:6.500px" width="9" height="9" viewBox="0 0 9 9"><path d="M1 1L8 8M8 1L1 8" stroke="#9a9080" stroke-width="1.900"/></svg>
</div>
<!-- tab nav arrows -->
<svg class="abs" style="left:1844px;top:112px" width="50" height="14" viewBox="0 0 50 14"><path d="M8.500 2.500V10.500L4 6.500Z" fill="#fff" stroke="#000" stroke-width="1"/><path d="M21.500 2.500V10.500L26 6.500Z" fill="#fff" stroke="#000" stroke-width="1"/><path d="M36 7H44L40 11Z" fill="#000"/></svg>
<!-- right docked vertical tab -->
<div class="abs" style="left:1896px;top:108px;width:24px;height:92px">
 <svg class="abs" style="left:0;top:0" width="24" height="92" viewBox="0 0 24 92"><defs><linearGradient id="vg" x1="0" y1="0" x2="1" y2="0"><stop offset="0" stop-color="#fbc07a"/><stop offset=".4" stop-color="#fddcb0"/><stop offset="1" stop-color="#fbb562"/></linearGradient></defs>
 <path d="M24 2L3.500 22.500Q1.500 24.500 1.500 27.500V86Q1.500 89.500 5 89.500H24Z" fill="url(#vg)" stroke="#2c58b0" stroke-width="1"/></svg>
 <div class="abs" style="left:5px;top:29px;width:16px;height:8px;background:#1a78e6"></div>
 <svg class="abs" style="left:5px;top:29px" width="16" height="8" viewBox="0 0 16 8"><text x="8" y="7" font-family="Liberation Sans,sans-serif" font-size="7.500" font-weight="bold" fill="#fff" text-anchor="middle" textLength="14" lengthAdjust="spacingAndGlyphs">Dev</text></svg>
 <svg class="abs" style="left:10px;top:37px" width="12" height="7" viewBox="0 0 12 7"><ellipse cx="6" cy="3.500" rx="5" ry="2.800" fill="#fff" stroke="#444" stroke-width=".8"/><circle cx="6" cy="3.500" r="2" fill="#5a1a10"/></svg>
 <div class="abs" style="left:-9px;top:58px;width:40px;height:14px;transform:rotate(90deg);transform-origin:center;font-weight:bold;font-size:12px;line-height:14px;white-space:nowrap;text-align:center">监看1</div>
</div>
<!-- main menu popup -->
<div class="menu" id="m1" style="left:10px;top:47px;width:265px;height:675px">
<div class="gut"></div>
<div class="it" style="top:1px;width:262px"><span style="left:36px">新建(<u>N</u>)...</span><span class="k">Ctrl+N</span></div>
<div class="it" style="top:24px;width:262px"><span style="left:36px">打开(<u>O</u>)...</span><span class="k">Ctrl+O</span></div>
<div class="it" style="top:47px;width:262px"><span style="left:36px">关闭(<u>C</u>)</span></div>
<div class="it" style="top:70px;width:262px"><span style="left:36px">保存(<u>S</u>)</span><span class="k">Ctrl+S</span></div>
<div class="it" style="top:93px;width:262px"><span style="left:36px">另存为(<u>A</u>)...</span></div>
<div class="hr" style="left:36px;top:117px;width:227px"></div>
<div class="it" style="top:119px;width:262px"><span style="left:36px">压缩/解压缩(<u>M</u>)</span><div class="ar"></div></div>
<div class="hr" style="left:36px;top:143px;width:227px"></div>
<div class="it" style="top:145px;width:262px"><span style="left:36px">删除(<u>D</u>)...</span></div>
<div class="it" style="top:168px;width:262px"><span style="left:36px">工程校验(<u>V</u>)...</span></div>
<div class="it" style="top:191px;width:262px"><span style="left:36px">工程更改履历(<u>P</u>)</span><div class="ar"></div></div>
<div class="it" style="top:214px;width:262px"><span style="left:36px">PLC类型更改(<u>H</u>)...</span></div>
<div class="it" style="top:237px;width:262px"><span style="left:36px">工程类型更改(<u>G</u>)</span></div>
<div class="hr" style="left:36px;top:261px;width:227px"></div>
<div class="it" style="top:263px;width:262px"><span style="left:36px">数据操作(<u>E</u>)</span><div class="ar"></div></div>
<div class="hr" style="left:36px;top:287px;width:227px"></div>
<div class="it" style="top:289px;width:262px"><span style="left:36px">智能功能模块(<u>F</u>)</span><div class="ar"></div></div>
<div class="hr" style="left:36px;top:313px;width:227px"></div>
<div class="it" style="top:315px;width:262px"><span style="left:36px">打开其他格式数据(<u>R</u>)</span><div class="ar"></div></div>
<div class="it dis" style="top:338px;width:262px"><span style="left:36px;letter-spacing:.2px">保存GX Developer格式工程(<u>X</u>)...</span></div>
<div class="hr" style="left:36px;top:362px;width:227px"></div>
<div class="hot" style="left:1px;top:364px;width:261px;height:23px"></div>
<div class="it" style="top:364px;width:262px"><span style="left:36px">库操作(<u>L</u>)</span><div class="ar"></div></div>
<div class="it" style="top:387px;width:262px"><span style="left:36px">安全性(<u>U</u>)</span><div class="ar"></div></div>
<div class="hr" style="left:36px;top:411px;width:227px"></div>
<div class="it" style="top:413px;width:262px"><span style="left:36px">打印(<u>J</u>)...</span><span class="k">Ctrl+P</span></div>
<div class="it" style="top:436px;width:262px"><span style="left:36px">打印预览(<u>B</u>)...</span></div>
<div class="it" style="top:459px;width:262px"><span style="left:36px">显示画面打印(<u>W</u>)...</span></div>
<div class="it" style="top:482px;width:262px"><span style="left:36px">显示画面预览(<u>I</u>)...</span></div>
<div class="it" style="top:505px;width:262px"><span style="left:36px">打印设置(<u>T</u>)...</span></div>
<div class="hr" style="left:36px;top:529px;width:227px"></div>
<div class="it" style="top:531px;width:262px"><span style="left:36px;letter-spacing:.4px"><u>1</u> 7-28 A线 冲坑.gxw</span></div>
<div class="it" style="top:554px;width:262px"><span style="left:36px;letter-spacing:.5px"><u>2</u> L:\取经\...\5-18\丰科19-11-6.gxw</span></div>
<div class="it" style="top:577px;width:262px"><span style="left:36px;letter-spacing:.52px"><u>3</u> C:\Users\...\Desktop\1.gxw</span></div>
<div class="it" style="top:600px;width:262px"><span style="left:36px;letter-spacing:.65px"><u>4</u> G:\智赢\plc\plc</span></div>
<div class="hr" style="left:36px;top:624px;width:227px"></div>
<div class="it" style="top:626px;width:262px"><span style="left:36px;letter-spacing:.3px">起动GX Developer(<u>Z</u>)</span></div>
<div class="it" style="top:649px;width:262px"><span style="left:36px">退出(<u>Q</u>)</span></div>
<svg class="abs" style="left:8px;top:5px" width="14" height="16" viewBox="0 0 14 16"><path d="M1.500 0.500H8L11.500 4V15.500H1.500Z" fill="#fff" stroke="#333"/><path d="M8 0.500V4H11.500" fill="#eee" stroke="#333" stroke-width=".9"/></svg>
<svg class="abs" style="left:6px;top:28px" width="18" height="17" viewBox="0 0 18 17"><path d="M1 5H6L7.500 6.500H13V15H1Z" fill="#e8b020" stroke="#8a6a10" stroke-width=".8"/><path d="M1 15L4 9H16.500L13 15Z" fill="#fcd848" stroke="#8a6a10" stroke-width=".8"/><path d="M8 1.500C11.500 0.500 14 2 14.500 4.500H16.500L13.500 8L10.500 4.500H12.500C12 3 10.500 2 8 1.500Z" fill="#1a3ae0"/></svg>
<svg class="abs" style="left:6px;top:74px" width="16" height="16" viewBox="0 0 16 16"><path d="M0.500 0.500H13.500L15.500 2.500V15.500H0.500Z" fill="#3a3a32" stroke="#111"/><rect x="4" y="0.500" width="8" height="5.500" fill="#d8d8e4"/><rect x="9" y="1.500" width="2" height="3.500" fill="#3a3a32"/><rect x="3" y="8.500" width="10" height="7" fill="#f0d878"/><path d="M4 10.500H12M4 12.500H12" stroke="#b09830" stroke-width=".8"/></svg>
<svg class="abs" style="left:6px;top:416px" width="18" height="17" viewBox="0 0 18 17"><path d="M5 1H13L14 6H4Z" fill="#fff" stroke="#444" stroke-width=".9"/><path d="M1.500 6.500Q1.500 5.500 3 5.500H15Q16.500 5.500 16.500 6.500V12.500H1.500Z" fill="#c8c8c8" stroke="#333" stroke-width=".9"/><rect x="3.500" y="10.500" width="11" height="4.500" fill="#888" stroke="#333" stroke-width=".9"/><rect x="12" y="7.500" width="3" height="1.500" fill="#e8e020"/><path d="M5 3H12M5 4.500H12.500" stroke="#999" stroke-width=".7"/></svg>
</div>
<!-- submenu popup -->
<div class="menu" id="m2" style="left:274px;top:412px;width:201px;height:294px">
<div class="gut"></div>
<div class="it dis" style="top:1px;width:198px"><span style="left:36px">新建库(<u>C</u>)...</span></div>
<div class="hot" style="left:1px;top:24px;width:197px;height:23px"></div>
<div class="it" style="top:24px;width:198px"><span style="left:36px">在工程中获取库(<u>I</u>)...</span></div>
<div class="it" style="top:47px;width:198px"><span style="left:36px;letter-spacing:-.18px">将FB输出至库(工程)(<u>E</u>)...</span></div>
<div class="it dis" style="top:70px;width:198px"><span style="left:36px">从工程中删除库(<u>D</u>)</span></div>
<div class="it dis" style="top:93px;width:198px"><span style="left:36px">重新读入库文件(<u>R</u>)</span></div>
<div class="hr" style="left:36px;top:117px;width:163px"></div>
<div class="it dis" style="top:119px;width:198px"><span style="left:36px">更改库名(<u>M</u>)</span></div>
<div class="hr" style="left:36px;top:143px;width:163px"></div>
<div class="it dis" style="top:145px;width:198px"><span style="left:36px">将库设置为可编辑(<u>O</u>)</span></div>
<div class="it dis" style="top:168px;width:198px"><span style="left:36px">将库设置为不可编辑(<u>L</u>)</span></div>
<div class="hr" style="left:36px;top:192px;width:163px"></div>
<div class="it dis" style="top:194px;width:198px"><span style="left:36px">库口令设置(<u>P</u>)...</span></div>
<div class="hr" style="left:36px;top:218px;width:163px"></div>
<div class="it dis" style="top:220px;width:198px"><span style="left:36px">库文件另存为(<u>A</u>)...</span></div>
<div class="it dis" style="top:243px;width:198px"><span style="left:36px">保存库文件(<u>S</u>)</span></div>
<div class="hr" style="left:36px;top:267px;width:163px"></div>
<div class="it dis" style="top:269px;width:198px"><span style="left:36px">库帮助显示(<u>H</u>)...</span></div>
<svg class="abs" style="left:6px;top:4px" width="18" height="18" viewBox="0 0 18 18"><rect x="7.500" y="2.500" width="8" height="10" fill="#ececf4" stroke="#c4c2d8"/><path d="M7.500 4.500H15.500" stroke="#c4c2d8" stroke-width="1.500"/><path d="M3.500 7.500H8.500L10.500 9.500V15.500H3.500Z" fill="#f0f0f6" stroke="#b8b6ce"/><path d="M5 10.500H9M5 12.500H9" stroke="#b8b6ce" stroke-width=".9"/><path d="M4 0.500L4.800 2.700L7 3.500L4.800 4.300L4 6.500L3.200 4.300L1 3.500L3.200 2.700Z" fill="#d0cee0"/></svg>
</div>
<div class="abs" id="mpatch" style="left:11px;top:47px;width:53px;height:1px;background:#cfcee1"></div>
</body>
</html>
